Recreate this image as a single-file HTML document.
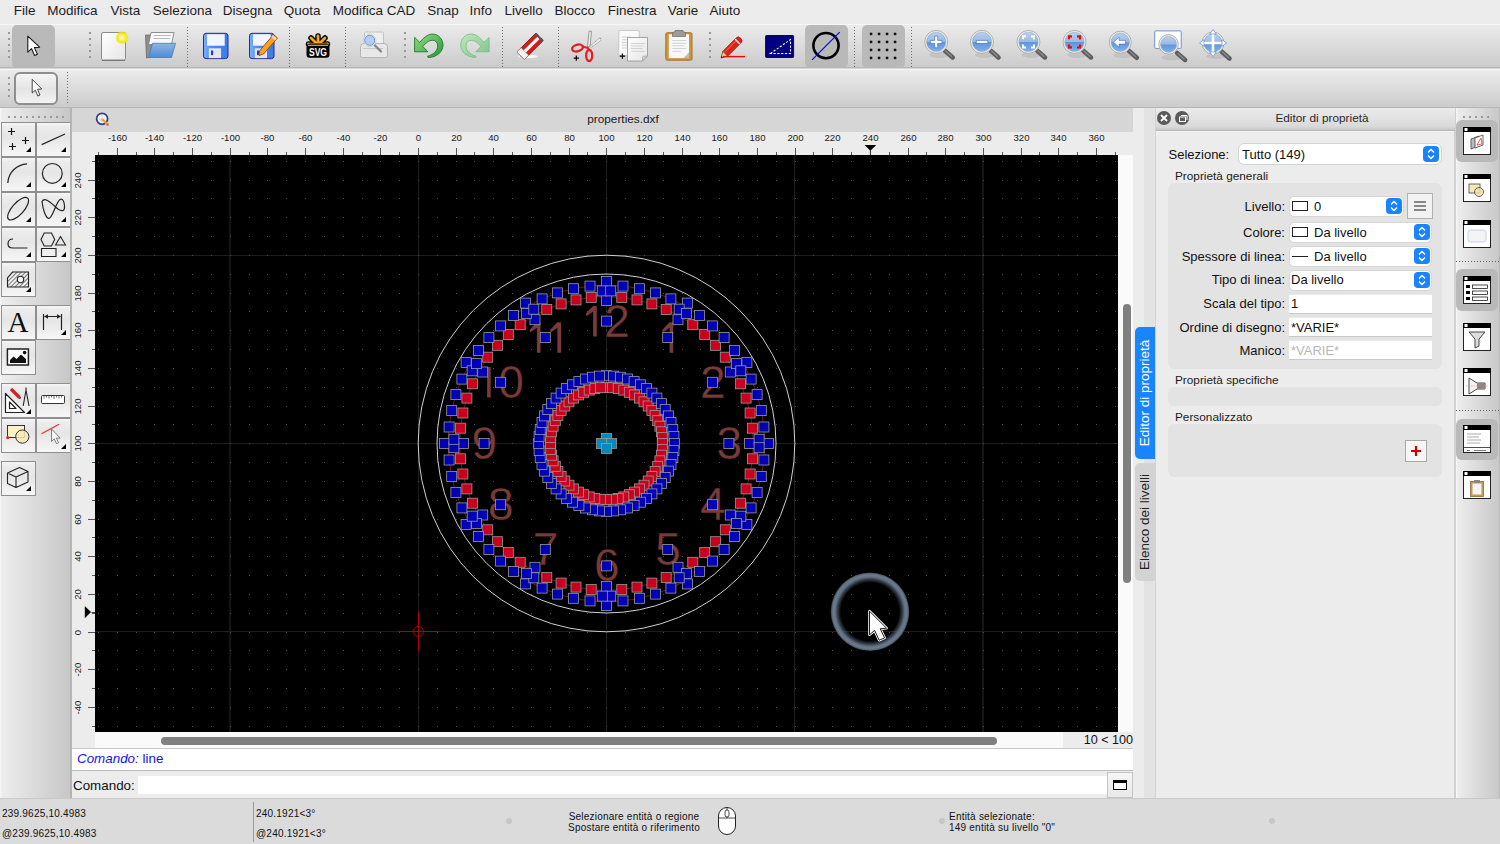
<!DOCTYPE html><html><head><meta charset="utf-8"><style>
html,body{margin:0;padding:0;width:1500px;height:844px;overflow:hidden;background:#ececec;font-family:"Liberation Sans", sans-serif;}
.t{position:absolute;white-space:nowrap;line-height:1;}
.b{position:absolute;box-sizing:border-box;}
svg{position:absolute;display:block;}
</style></head><body>
<div class="b" style="left:0px;top:0px;width:1500px;height:24px;background:#ececec"></div>
<div class="t" style="left:13.8px;top:3.6px;font-size:13.5px;color:#1d1d1d;">File</div>
<div class="t" style="left:47.2px;top:3.6px;font-size:13.5px;color:#1d1d1d;">Modifica</div>
<div class="t" style="left:110.5px;top:3.6px;font-size:13.5px;color:#1d1d1d;">Vista</div>
<div class="t" style="left:152.8px;top:3.6px;font-size:13.5px;color:#1d1d1d;">Seleziona</div>
<div class="t" style="left:222.8px;top:3.6px;font-size:13.5px;color:#1d1d1d;">Disegna</div>
<div class="t" style="left:283.8px;top:3.6px;font-size:13.5px;color:#1d1d1d;">Quota</div>
<div class="t" style="left:332.8px;top:3.6px;font-size:13.5px;color:#1d1d1d;">Modifica CAD</div>
<div class="t" style="left:427.2px;top:3.6px;font-size:13.5px;color:#1d1d1d;">Snap</div>
<div class="t" style="left:469.5px;top:3.6px;font-size:13.5px;color:#1d1d1d;">Info</div>
<div class="t" style="left:504.5px;top:3.6px;font-size:13.5px;color:#1d1d1d;">Livello</div>
<div class="t" style="left:554.5px;top:3.6px;font-size:13.5px;color:#1d1d1d;">Blocco</div>
<div class="t" style="left:607.8px;top:3.6px;font-size:13.5px;color:#1d1d1d;">Finestra</div>
<div class="t" style="left:667.8px;top:3.6px;font-size:13.5px;color:#1d1d1d;">Varie</div>
<div class="t" style="left:709.5px;top:3.6px;font-size:13.5px;color:#1d1d1d;">Aiuto</div>
<div class="b" style="left:0px;top:24px;width:1500px;height:1px;background:#f6f6f6"></div>
<div class="b" style="left:0px;top:25px;width:1500px;height:42px;background:linear-gradient(#ebebeb,#cbcbcb)"></div>
<div class="b" style="left:0px;top:67px;width:1500px;height:1px;background:#b5b5b5"></div>
<div class="b" style="left:0px;top:68px;width:1500px;height:1px;background:#d6d6d6"></div>
<div class="b" style="left:0px;top:69px;width:1500px;height:1px;background:#f6f6f6"></div>
<div class="b" style="left:0px;top:70px;width:1500px;height:37px;background:linear-gradient(#ebebeb,#cbcbcb)"></div>
<div class="b" style="left:0px;top:107px;width:1500px;height:1px;background:#b5b5b5"></div>
<svg style="left:0;top:0" width="1500" height="110" viewBox="0 0 1500 110" shape-rendering="crispEdges"><path d="M8 32h2v2h-2zM8 38h2v2h-2zM8 44h2v2h-2zM8 50h2v2h-2zM8 56h2v2h-2zM89 32h2v2h-2zM89 38h2v2h-2zM89 44h2v2h-2zM89 50h2v2h-2zM89 56h2v2h-2zM404 32h2v2h-2zM404 38h2v2h-2zM404 44h2v2h-2zM404 50h2v2h-2zM404 56h2v2h-2zM709 32h2v2h-2zM709 38h2v2h-2zM709 44h2v2h-2zM709 50h2v2h-2zM709 56h2v2h-2zM8 77h2v2h-2zM8 83h2v2h-2zM8 89h2v2h-2zM8 95h2v2h-2z" fill="#9a9a9a"/><path d="M187 27h1v1h-1zM187 30h1v1h-1zM187 33h1v1h-1zM187 36h1v1h-1zM187 39h1v1h-1zM187 42h1v1h-1zM187 45h1v1h-1zM187 48h1v1h-1zM187 51h1v1h-1zM187 54h1v1h-1zM187 57h1v1h-1zM187 60h1v1h-1zM187 63h1v1h-1zM187 66h1v1h-1zM289 27h1v1h-1zM289 30h1v1h-1zM289 33h1v1h-1zM289 36h1v1h-1zM289 39h1v1h-1zM289 42h1v1h-1zM289 45h1v1h-1zM289 48h1v1h-1zM289 51h1v1h-1zM289 54h1v1h-1zM289 57h1v1h-1zM289 60h1v1h-1zM289 63h1v1h-1zM289 66h1v1h-1zM345 27h1v1h-1zM345 30h1v1h-1zM345 33h1v1h-1zM345 36h1v1h-1zM345 39h1v1h-1zM345 42h1v1h-1zM345 45h1v1h-1zM345 48h1v1h-1zM345 51h1v1h-1zM345 54h1v1h-1zM345 57h1v1h-1zM345 60h1v1h-1zM345 63h1v1h-1zM345 66h1v1h-1zM502 27h1v1h-1zM502 30h1v1h-1zM502 33h1v1h-1zM502 36h1v1h-1zM502 39h1v1h-1zM502 42h1v1h-1zM502 45h1v1h-1zM502 48h1v1h-1zM502 51h1v1h-1zM502 54h1v1h-1zM502 57h1v1h-1zM502 60h1v1h-1zM502 63h1v1h-1zM502 66h1v1h-1zM558 27h1v1h-1zM558 30h1v1h-1zM558 33h1v1h-1zM558 36h1v1h-1zM558 39h1v1h-1zM558 42h1v1h-1zM558 45h1v1h-1zM558 48h1v1h-1zM558 51h1v1h-1zM558 54h1v1h-1zM558 57h1v1h-1zM558 60h1v1h-1zM558 63h1v1h-1zM558 66h1v1h-1zM854 27h1v1h-1zM854 30h1v1h-1zM854 33h1v1h-1zM854 36h1v1h-1zM854 39h1v1h-1zM854 42h1v1h-1zM854 45h1v1h-1zM854 48h1v1h-1zM854 51h1v1h-1zM854 54h1v1h-1zM854 57h1v1h-1zM854 60h1v1h-1zM854 63h1v1h-1zM854 66h1v1h-1zM911 27h1v1h-1zM911 30h1v1h-1zM911 33h1v1h-1zM911 36h1v1h-1zM911 39h1v1h-1zM911 42h1v1h-1zM911 45h1v1h-1zM911 48h1v1h-1zM911 51h1v1h-1zM911 54h1v1h-1zM911 57h1v1h-1zM911 60h1v1h-1zM911 63h1v1h-1zM911 66h1v1h-1zM67 72h1v1h-1zM67 75h1v1h-1zM67 78h1v1h-1zM67 81h1v1h-1zM67 84h1v1h-1zM67 87h1v1h-1zM67 90h1v1h-1zM67 93h1v1h-1zM67 96h1v1h-1zM67 99h1v1h-1zM67 102h1v1h-1z" fill="#6e6e6e"/></svg>
<div class="b" style="left:12px;top:25px;width:43px;height:43px;background:#b9b9b9;border-radius:5px"></div>
<div class="b" style="left:805px;top:25px;width:43px;height:43px;background:#b9b9b9;border-radius:5px"></div>
<div class="b" style="left:862px;top:25px;width:43px;height:43px;background:#b9b9b9;border-radius:5px"></div>
<div class="b" style="left:14px;top:72px;width:44px;height:33px;border:2px solid #8e8e8e;border-radius:6px;background:linear-gradient(#f6f6f6,#e4e4e4 50%,#f2f2f2)"></div>
<svg style="left:0;top:0" width="1500" height="108" viewBox="0 0 1500 108"><defs>
<linearGradient id="mg" x1="0" y1="0" x2="0" y2="1"><stop offset="0" stop-color="#a9c3e8"/><stop offset="0.5" stop-color="#7ba6dc"/><stop offset="0.52" stop-color="#5f95da"/><stop offset="1" stop-color="#7fb0ea"/></linearGradient>
<linearGradient id="floppy" x1="0" y1="0" x2="1" y2="0"><stop offset="0" stop-color="#7fb2ff"/><stop offset="0.3" stop-color="#4d8ff5"/><stop offset="1" stop-color="#3b7be8"/></linearGradient>
<linearGradient id="gr" x1="0" y1="0" x2="1" y2="1"><stop offset="0" stop-color="#98dc82"/><stop offset="1" stop-color="#24983a"/></linearGradient>
<linearGradient id="grl" x1="1" y1="0" x2="0" y2="1"><stop offset="0" stop-color="#c4e6be"/><stop offset="1" stop-color="#7cc28c"/></linearGradient>
<linearGradient id="folder" x1="0" y1="0" x2="0" y2="1"><stop offset="0" stop-color="#8fb6e6"/><stop offset="1" stop-color="#4f8ad6"/></linearGradient>
<radialGradient id="glow" cx="0.5" cy="0.5" r="0.5"><stop offset="0" stop-color="#ffffff"/><stop offset="0.3" stop-color="#fff36a"/><stop offset="0.7" stop-color="#f2e61a"/><stop offset="1" stop-color="#f2e61a" stop-opacity="0"/></radialGradient>
<linearGradient id="paper" x1="0" y1="0" x2="1" y2="1"><stop offset="0" stop-color="#ffffff"/><stop offset="1" stop-color="#e6e6e6"/></linearGradient>
</defs><path d="M27.8 36.2 L27.8 52.2 L31.6 48.7 L34.6 55.6 L37.4 54.3 L34.4 47.6 L39.6 47.2 Z" fill="#fff" stroke="#1a1a1a" stroke-width="1.1" stroke-linejoin="round"/><rect x="101.5" y="32.5" width="24" height="27.5" rx="1.5" fill="url(#paper)" stroke="#8a8a8a"/><path d="M102 60.5h23" stroke="#777" stroke-width="1"/><circle cx="122" cy="37.7" r="7" fill="url(#glow)"/><path d="M145.5 35 h6 l1 1 v20.5 l-6 1.5z" fill="#8e8e8e" stroke="#6a6a6a" stroke-width="0.8"/><path d="M151 32.5 h23 l-2.5 12 h-23z" fill="#f8f8f8" stroke="#777" stroke-width="0.8"/><path d="M154 35.5h17M153.5 38.5h17" stroke="#bbb" stroke-width="1.2"/><path d="M148.5 57.5 L152.5 43.3 H175.5 L171.5 57.5 Z" fill="url(#folder)" stroke="#3f78c8" stroke-width="0.8" stroke-linejoin="round"/><rect x="203.5" y="33.3" width="24.5" height="25.3" rx="2.5" fill="url(#floppy)" stroke="#2a2a9a" stroke-width="1"/><rect x="207" y="34.2" width="17.7" height="11.5" fill="#f2f5ff"/><rect x="208.8" y="48.3" width="12.2" height="9.8" fill="#e4e4ea"/><rect x="211" y="50.5" width="2.2" height="4.6" fill="#1a3fd0"/><rect x="249.5" y="33.3" width="24.5" height="25.3" rx="2.5" fill="url(#floppy)" stroke="#2a2a9a" stroke-width="1"/><rect x="253" y="34.2" width="17.7" height="11.5" fill="#f2f5ff"/><rect x="254.8" y="48.3" width="12.2" height="9.8" fill="#e4e4ea"/><rect x="257" y="50.5" width="2.2" height="4.6" fill="#1a3fd0"/><path d="M259.5 51 L273.5 34.5 L277.5 38 L263.5 54 L259 55.5 Z" fill="#f7a51c" stroke="#a0400a" stroke-width="0.9" stroke-linejoin="round"/><path d="M272 36 L276 39.5" stroke="#f4d0c0" stroke-width="2.5"/><g transform="translate(306,34)"><path d="M12 11 L12 2 M12 11 L5 4 M12 11 L19 4 M12 11 L2.5 10 M12 11 L21.5 10" stroke="#000" stroke-width="5.5" stroke-linecap="round"/><path d="M12 11 L12 2 M12 11 L5 4 M12 11 L19 4 M12 11 L2.5 10 M12 11 L21.5 10" stroke="#f6a623" stroke-width="2.8" stroke-linecap="round"/><path d="M0.5 13.5 Q0.5 9.5 4 9.5 H20 Q23.5 9.5 23.5 13.5 V20.5 Q23.5 23.7 20.5 23.7 H3.5 Q0.5 23.7 0.5 20.5Z" fill="#000"/><path d="M2 11.3 H22" stroke="#f6a623" stroke-width="1.2"/><text x="12" y="22.2" text-anchor="middle" font-family="Liberation Sans" font-weight="bold" font-size="10.5" fill="#fff" textLength="18" lengthAdjust="spacingAndGlyphs">SVG</text></g><rect x="364.5" y="32" width="19" height="14" rx="1" fill="#efefef" stroke="#b8b8b8" stroke-width="0.8"/><path d="M360.5 47 Q360.5 43.5 364 43.5 H384 Q387.5 43.5 387.5 47 V55.5 Q387.5 57.5 385.5 57.5 H362.5 Q360.5 57.5 360.5 55.5Z" fill="#e8e8e8" stroke="#a8a8a8" stroke-width="0.8"/><path d="M363 48.5h20" stroke="#c8c8c8" stroke-width="1"/><line x1="373.5" y1="44" x2="381" y2="51.5" stroke="#888" stroke-width="2.4" stroke-linecap="round"/><circle cx="369.7" cy="40.3" r="6.3" fill="#f4f4f4" stroke="#c8c8c8" stroke-width="0.8"/><circle cx="369.7" cy="40.3" r="5" fill="#b6cdee" stroke="#5c8fd0" stroke-width="0.9"/><path d="M414.6 37.4 L419.8 42.4 C423 38.3 427.5 34 432.5 34 C438.5 34 443 39.3 443 45 C443 52 436.5 57.5 428 57.5 L427.6 56.2 C433.2 54.8 437.7 50.8 437.7 46 C437.7 42.3 435.5 40.3 432.5 40.3 C428.8 40.3 425.6 43.2 422.8 46.4 L427.8 51.8 L414.6 51.8 Z" fill="url(#gr)" stroke="#1b7a2d" stroke-width="0.9" stroke-linejoin="round"/><g transform="translate(903.7,0) scale(-1,1)"><path d="M414.6 37.4 L419.8 42.4 C423 38.3 427.5 34 432.5 34 C438.5 34 443 39.3 443 45 C443 52 436.5 57.5 428 57.5 L427.6 56.2 C433.2 54.8 437.7 50.8 437.7 46 C437.7 42.3 435.5 40.3 432.5 40.3 C428.8 40.3 425.6 43.2 422.8 46.4 L427.8 51.8 L414.6 51.8 Z" fill="url(#grl)" stroke="#79bf88" stroke-width="0.9" stroke-linejoin="round"/></g><ellipse cx="528" cy="56.5" rx="10" ry="1.6" fill="#fff" opacity="0.8"/><ellipse cx="524" cy="56.3" rx="4" ry="1.2" fill="#666" opacity="0.5"/><g transform="rotate(-45 530 46)"><rect x="516.5" y="41" width="27" height="10.5" rx="1" fill="#d41c1c" stroke="#7a1010" stroke-width="0.8"/><rect x="516.5" y="41" width="6" height="10.5" fill="#f2f2f2" stroke="#888" stroke-width="0.6"/><rect x="522.5" y="44.6" width="21" height="3.2" fill="#fafafa"/><rect x="541.5" y="41" width="2" height="10.5" fill="#555"/></g><path d="M587.5 47 L589 31 L591.5 31.2 L590 46z" fill="#eee" stroke="#777" stroke-width="0.7"/><path d="M589.5 46.5 L600.3 37.5 L601 40.5 L591 47.5z" fill="#eee" stroke="#777" stroke-width="0.7" stroke-dasharray="1.2 0.6"/><ellipse cx="577.5" cy="48" rx="5.5" ry="3.3" transform="rotate(-15 577.5 48)" fill="none" stroke="#e02020" stroke-width="2.3"/><ellipse cx="589.2" cy="55.5" rx="3" ry="5.5" fill="none" stroke="#e02020" stroke-width="2.3"/><path d="M582.5 46.5 L588 48 L589 50" stroke="#e02020" stroke-width="2" fill="none"/><path d="M576.3 55.5 v5.2 M573.7 58.1 h5.2" stroke="#000" stroke-width="1.2"/><rect x="618.8" y="30.5" width="20.5" height="25" rx="1.5" fill="#fafafa" stroke="#c0c0c0" stroke-width="0.8"/><path d="M622 37h8M622 39.8h8M622 42.5h8M622 45.2h8M622 48h8" stroke="#d0d0d0" stroke-width="1"/><path d="M627.5 37.5 h20 v18.5 l-5 5 h-15z" fill="url(#paper)" stroke="#9a9a9a" stroke-width="0.9" stroke-linejoin="round"/><path d="M642.5 61 l5-5 h-4 l-1 1z" fill="#ccc" stroke="#999" stroke-width="0.5"/><path d="M631 43.5h13.5M631 46h12.5M631 48.5h11.5M631 51.3h13.5" stroke="#ccc" stroke-width="0.9"/><path d="M622.4 53.4 v5.4 M619.7 56.1 h5.4" stroke="#000" stroke-width="1.3"/><rect x="665.8" y="32.7" width="26.2" height="27.5" rx="1.5" fill="#cf9640" stroke="#9a6a20" stroke-width="0.9"/><rect x="668.8" y="34.3" width="20.2" height="23.8" fill="#f8f8f8"/><path d="M683.5 58.1 l5.5-5.5 v5.5z" fill="#bdbdbd"/><path d="M672.3 40.5h14M672.3 43.3h14M672.3 45.8h12M672.3 48.5h14M672.3 51.4h9" stroke="#cfcfcf" stroke-width="0.9"/><path d="M672.5 33.5 Q672.5 32 674 32 H675 V30.5 H683 V32 H684 Q685.5 32 685.5 33.5 V36.5 H672.5Z" fill="#9c9c94" stroke="#6a6a64" stroke-width="0.7"/><g transform="rotate(-45 733 46)"><path d="M722 42.6 h19.5 q2.5 0 2.5 3.4 q0 3.4 -2.5 3.4 h-19.5z" fill="#e0201c" stroke="#7a3a10" stroke-width="0.8"/><rect x="738.5" y="42.6" width="1.6" height="6.8" fill="#d8d8d8"/><path d="M722 42.6 L716 46 L722 49.4z" fill="#f0c8a0" stroke="#7a3a10" stroke-width="0.7"/><path d="M718 44.9 L716 46 L718 47.1z" fill="#222"/><path d="M723 44.5h16" stroke="#f06a40" stroke-width="1"/></g><path d="M723 56.6 H745" stroke="#ff0000" stroke-width="1.4"/><rect x="765.6" y="35.5" width="28" height="22" rx="0.8" fill="#000080" stroke="#111" stroke-width="1"/><path d="M770.5 53.5 L790.5 39.5 V53.5 Z" fill="none" stroke="#fff" stroke-width="1.1" stroke-dasharray="2.2 1.6"/><circle cx="826" cy="45.6" r="12.6" fill="none" stroke="#000" stroke-width="2.6"/><line x1="812" y1="59.8" x2="839.7" y2="32.1" stroke="#0000ff" stroke-width="1.1"/><rect x="869.8" y="32.699999999999996" width="2.5" height="2.5" fill="#111"/><rect x="869.8" y="40.699999999999996" width="2.5" height="2.5" fill="#111"/><rect x="869.8" y="48.699999999999996" width="2.5" height="2.5" fill="#111"/><rect x="869.8" y="56.699999999999996" width="2.5" height="2.5" fill="#111"/><rect x="877.8" y="32.699999999999996" width="2.5" height="2.5" fill="#111"/><rect x="877.8" y="40.699999999999996" width="2.5" height="2.5" fill="#111"/><rect x="877.8" y="48.699999999999996" width="2.5" height="2.5" fill="#111"/><rect x="877.8" y="56.699999999999996" width="2.5" height="2.5" fill="#111"/><rect x="885.8" y="32.699999999999996" width="2.5" height="2.5" fill="#111"/><rect x="885.8" y="40.699999999999996" width="2.5" height="2.5" fill="#111"/><rect x="885.8" y="48.699999999999996" width="2.5" height="2.5" fill="#111"/><rect x="885.8" y="56.699999999999996" width="2.5" height="2.5" fill="#111"/><rect x="893.8" y="32.699999999999996" width="2.5" height="2.5" fill="#111"/><rect x="893.8" y="40.699999999999996" width="2.5" height="2.5" fill="#111"/><rect x="893.8" y="48.699999999999996" width="2.5" height="2.5" fill="#111"/><rect x="893.8" y="56.699999999999996" width="2.5" height="2.5" fill="#111"/><g>
<ellipse cx="939.2" cy="54.9" rx="10" ry="3" fill="#000" opacity="0.08"/>
<line x1="944.7" y1="50.4" x2="952.7" y2="57.4" stroke="#5e5e5e" stroke-width="4.6" stroke-linecap="round"/>
<line x1="945.7" y1="50.9" x2="951.7" y2="56.4" stroke="#8a8a8a" stroke-width="1.4" stroke-linecap="round"/>
<circle cx="936.2" cy="41.9" r="11.5" fill="#eeeee8" stroke="#a9a9a0" stroke-width="0.9"/>
<circle cx="936.2" cy="41.9" r="9.7" fill="url(#mg)" stroke="#9ab2d2" stroke-width="0.6"/>
<path d="M927.1 41.9 A9.1 9.1 0 0 1 945.3000000000001 41.9Z" fill="#fff" opacity="0.22"/>
<path d="M934.7 36.1h3v4.3h4.3v3h-4.3v4.3h-3v-4.3h-4.3v-3h4.3z" fill="#fff" stroke="#2b5fb0" stroke-width="0.6"/>
</g><g>
<ellipse cx="985.0" cy="54.9" rx="10" ry="3" fill="#000" opacity="0.08"/>
<line x1="990.5" y1="50.4" x2="998.5" y2="57.4" stroke="#5e5e5e" stroke-width="4.6" stroke-linecap="round"/>
<line x1="991.5" y1="50.9" x2="997.5" y2="56.4" stroke="#8a8a8a" stroke-width="1.4" stroke-linecap="round"/>
<circle cx="982" cy="41.9" r="11.5" fill="#eeeee8" stroke="#a9a9a0" stroke-width="0.9"/>
<circle cx="982" cy="41.9" r="9.7" fill="url(#mg)" stroke="#9ab2d2" stroke-width="0.6"/>
<path d="M972.9 41.9 A9.1 9.1 0 0 1 991.1 41.9Z" fill="#fff" opacity="0.22"/>
<path d="M976.3 40.4h11.5v3h-11.5z" fill="#fff" stroke="#2b5fb0" stroke-width="0.6"/>
</g><g>
<ellipse cx="1031.5" cy="54.9" rx="10" ry="3" fill="#000" opacity="0.08"/>
<line x1="1037.0" y1="50.4" x2="1045.0" y2="57.4" stroke="#5e5e5e" stroke-width="4.6" stroke-linecap="round"/>
<line x1="1038.0" y1="50.9" x2="1044.0" y2="56.4" stroke="#8a8a8a" stroke-width="1.4" stroke-linecap="round"/>
<circle cx="1028.5" cy="41.9" r="11.5" fill="#eeeee8" stroke="#a9a9a0" stroke-width="0.9"/>
<circle cx="1028.5" cy="41.9" r="9.7" fill="url(#mg)" stroke="#9ab2d2" stroke-width="0.6"/>
<path d="M1019.4 41.9 A9.1 9.1 0 0 1 1037.6000000000001 41.9Z" fill="#fff" opacity="0.22"/>
<path d="M1023.0 39.3v-3h3M1031.0 36.4h3v3M1034.0 44.5v3h-3M1026.0 47.4h-3v-3" stroke="#fff" stroke-width="2" fill="none"/>
</g><g>
<ellipse cx="1077.5" cy="54.9" rx="10" ry="3" fill="#000" opacity="0.08"/>
<line x1="1083.0" y1="50.4" x2="1091.0" y2="57.4" stroke="#5e5e5e" stroke-width="4.6" stroke-linecap="round"/>
<line x1="1084.0" y1="50.9" x2="1090.0" y2="56.4" stroke="#8a8a8a" stroke-width="1.4" stroke-linecap="round"/>
<circle cx="1074.5" cy="41.9" r="11.5" fill="#eeeee8" stroke="#a9a9a0" stroke-width="0.9"/>
<circle cx="1074.5" cy="41.9" r="9.7" fill="url(#mg)" stroke="#9ab2d2" stroke-width="0.6"/>
<path d="M1065.3999999999999 41.9 A9.1 9.1 0 0 1 1083.6000000000001 41.9Z" fill="#fff" opacity="0.22"/>
<path d="M1069.0 39.3v-3h3M1077.0 36.4h3v3M1080.0 44.5v3h-3M1072.0 47.4h-3v-3" stroke="#ff0000" stroke-width="2.2" fill="none"/>
</g><g>
<ellipse cx="1123.3" cy="55.2" rx="10" ry="3" fill="#000" opacity="0.08"/>
<line x1="1128.8" y1="50.7" x2="1136.8" y2="57.7" stroke="#5e5e5e" stroke-width="4.6" stroke-linecap="round"/>
<line x1="1129.8" y1="51.2" x2="1135.8" y2="56.7" stroke="#8a8a8a" stroke-width="1.4" stroke-linecap="round"/>
<circle cx="1120.3" cy="42.2" r="11" fill="#eeeee8" stroke="#a9a9a0" stroke-width="0.9"/>
<circle cx="1120.3" cy="42.2" r="9.2" fill="url(#mg)" stroke="#9ab2d2" stroke-width="0.6"/>
<path d="M1111.6999999999998 42.2 A8.6 8.6 0 0 1 1128.9 42.2Z" fill="#fff" opacity="0.22"/>
<path d="M1113.5 42.2 l5.5-5 v3.2 h6.5 v3.6 h-6.5 v3.2z" fill="#fff" stroke="#2b5fb0" stroke-width="0.5"/>
</g><rect x="1154.7" y="30.9" width="26.5" height="17.5" rx="1" fill="#fff" stroke="#6b93d0" stroke-width="1"/><g>
<ellipse cx="1171.6" cy="57.4" rx="10" ry="3" fill="#000" opacity="0.08"/>
<line x1="1177.1" y1="52.9" x2="1185.1" y2="59.9" stroke="#5e5e5e" stroke-width="4.6" stroke-linecap="round"/>
<line x1="1178.1" y1="53.4" x2="1184.1" y2="58.9" stroke="#8a8a8a" stroke-width="1.4" stroke-linecap="round"/>
<circle cx="1168.6" cy="44.4" r="9.8" fill="#eeeee8" stroke="#a9a9a0" stroke-width="0.9"/>
<circle cx="1168.6" cy="44.4" r="8.0" fill="url(#mg)" stroke="#9ab2d2" stroke-width="0.6"/>
<path d="M1161.1999999999998 44.4 A7.4 7.4 0 0 1 1176.0 44.4Z" fill="#fff" opacity="0.22"/>

</g><g>
<ellipse cx="1216.0" cy="56.0" rx="10" ry="3" fill="#000" opacity="0.08"/>
<line x1="1221.5" y1="51.5" x2="1229.5" y2="58.5" stroke="#5e5e5e" stroke-width="4.6" stroke-linecap="round"/>
<line x1="1222.5" y1="52" x2="1228.5" y2="57.5" stroke="#8a8a8a" stroke-width="1.4" stroke-linecap="round"/>
<circle cx="1213" cy="43" r="11" fill="#eeeee8" stroke="#a9a9a0" stroke-width="0.9"/>
<circle cx="1213" cy="43" r="9.2" fill="url(#mg)" stroke="#9ab2d2" stroke-width="0.6"/>
<path d="M1204.3999999999999 43 A8.6 8.6 0 0 1 1221.6000000000001 43Z" fill="#fff" opacity="0.22"/>
<path d="M1213 31v24M1201 43h24" stroke="#fff" stroke-width="2.6"/><path d="M1213 29.5l-3.2 4.5h6.4zM1213 56.5l-3.2-4.5h6.4zM1199.5 43l4.5-3.2v6.4zM1226.5 43l-4.5-3.2v6.4z" fill="#fff" stroke="#4a7cc8" stroke-width="0.6"/>
</g><path d="M32.2 79.3 L32.2 93 L35.3 90.2 L37.8 96 L40 95 L37.5 89.3 L41.8 89 Z" fill="#fff" stroke="#444" stroke-width="1" stroke-linejoin="round"/></svg>
<div class="b" style="left:0px;top:108px;width:70px;height:690px;background:linear-gradient(90deg,#f7f7f7 0px,#ededed 2px,#c7c7c7 70px)"></div>
<svg style="left:0;top:108" width="70" height="20" viewBox="0 108 70 20" shape-rendering="crispEdges"><path d="M8 116h2v2h-2zM14 116h2v2h-2zM20 116h2v2h-2zM26 116h2v2h-2zM32 116h2v2h-2zM38 116h2v2h-2zM44 116h2v2h-2zM50 116h2v2h-2zM56 116h2v2h-2zM62 116h2v2h-2z" fill="#9a9a9a"/></svg>
<svg style="left:0;top:0" width="72" height="500" viewBox="0 0 72 500"><defs><linearGradient id="lt" x1="0" y1="0" x2="0" y2="1"><stop offset="0" stop-color="#f7f7f7"/><stop offset="0.12" stop-color="#ececec"/><stop offset="0.45" stop-color="#e6e6e6"/><stop offset="1" stop-color="#f7f7f7"/></linearGradient><pattern id="hatch" width="3" height="3" patternUnits="userSpaceOnUse" patternTransform="rotate(45)"><rect width="3" height="3" fill="#f0f0f0"/><rect width="1" height="3" fill="#777"/></pattern></defs><rect x="1.5" y="122.5" width="34" height="34" fill="url(#lt)" stroke="#8f8f8f" stroke-width="1"/><rect x="36.5" y="122.5" width="34" height="34" fill="url(#lt)" stroke="#8f8f8f" stroke-width="1"/><rect x="1.5" y="157.5" width="34" height="34" fill="url(#lt)" stroke="#8f8f8f" stroke-width="1"/><rect x="36.5" y="157.5" width="34" height="34" fill="url(#lt)" stroke="#8f8f8f" stroke-width="1"/><rect x="1.5" y="192.5" width="34" height="34" fill="url(#lt)" stroke="#8f8f8f" stroke-width="1"/><rect x="36.5" y="192.5" width="34" height="34" fill="url(#lt)" stroke="#8f8f8f" stroke-width="1"/><rect x="1.5" y="227.5" width="34" height="34" fill="url(#lt)" stroke="#8f8f8f" stroke-width="1"/><rect x="36.5" y="227.5" width="34" height="34" fill="url(#lt)" stroke="#8f8f8f" stroke-width="1"/><rect x="1.5" y="262.5" width="34" height="34" fill="url(#lt)" stroke="#8f8f8f" stroke-width="1"/><rect x="1.5" y="305.5" width="34" height="34" fill="url(#lt)" stroke="#8f8f8f" stroke-width="1"/><rect x="36.5" y="305.5" width="34" height="34" fill="url(#lt)" stroke="#8f8f8f" stroke-width="1"/><rect x="1.5" y="340.5" width="34" height="34" fill="url(#lt)" stroke="#8f8f8f" stroke-width="1"/><rect x="1.5" y="383.5" width="34" height="34" fill="url(#lt)" stroke="#8f8f8f" stroke-width="1"/><rect x="36.5" y="383.5" width="34" height="34" fill="url(#lt)" stroke="#8f8f8f" stroke-width="1"/><rect x="1.5" y="418.5" width="34" height="34" fill="url(#lt)" stroke="#8f8f8f" stroke-width="1"/><rect x="36.5" y="418.5" width="34" height="34" fill="url(#lt)" stroke="#8f8f8f" stroke-width="1"/><rect x="1.5" y="461.5" width="34" height="34" fill="url(#lt)" stroke="#8f8f8f" stroke-width="1"/><path d="M8 131.5h7M11.5 128v7M22 140.5h7M25.5 137v7M9 146.5h7M12.5 143v7" stroke="#111" stroke-width="1.2" fill="none"/><path d="M31 152 L26 152 L31 147Z" fill="#000"/><path d="M41.7 144.6 L65 134" stroke="#222" stroke-width="1.2" fill="none"/><path d="M66 152 L61 152 L66 147Z" fill="#000"/><path d="M7.8 183 C8.5 172 17 164.5 27 163.8" stroke="#222" stroke-width="1.2" fill="none"/><path d="M31 187 L26 187 L31 182Z" fill="#000"/><circle cx="52.3" cy="173.4" r="9.9" stroke="#222" stroke-width="1.2" fill="none"/><path d="M66 187 L61 187 L66 182Z" fill="#000"/><ellipse cx="18.1" cy="208.7" rx="14.2" ry="5.8" transform="rotate(-48 18.1 208.7)" stroke="#222" stroke-width="1.2" fill="none"/><path d="M31 222 L26 222 L31 217Z" fill="#000"/><path d="M42 201.5 C43 210 46 218.5 49 218.3 C52 218 54 209 58 202 C61 197 64 199 64.5 206 C65 211 62 212 58 209 C52 204 45 196 42 201.5Z" stroke="#222" stroke-width="1.2" fill="none"/><path d="M66 222 L61 222 L66 217Z" fill="#000"/><path d="M13 239 C9 239 8 242 8 244 C8 246 9.5 248 13 248 H27.5" stroke="#222" stroke-width="1.2" fill="none"/><path d="M31 257 L26 257 L31 252Z" fill="#000"/><path d="M41 239.5 l3.2-6.5 h7.3 l3.2 6.5 l-3.2 6.5 h-7.3z M55.5 245 l5-8.5 l5 8.5z M41.5 248.5 h14.5 v8 h-14.5z" stroke="#222" stroke-width="1.1" fill="none"/><path d="M66 257 L61 257 L66 252Z" fill="#000"/><path d="M7.5 287 V278 l5-6 h16 v15z" fill="url(#hatch)" stroke="#222" stroke-width="1.1"/><circle cx="20.5" cy="279.5" r="3.2" fill="#f2f2f2" stroke="#222" stroke-width="1.1"/><path d="M31 292 L26 292 L31 287Z" fill="#000"/><text x="18" y="332" text-anchor="middle" font-family="Liberation Serif" font-size="29" fill="#111">A</text><path d="M43.5 314 v16 M61.5 314 v16 M45 316.5 h15" stroke="#222" stroke-width="1.2" fill="none"/><path d="M44 316.5 l4-2.2v4.4z M61 316.5 l-4-2.2v4.4z" fill="#222"/><path d="M66 335 L61 335 L66 330Z" fill="#000"/><rect x="7.4" y="349" width="21" height="16" fill="#fff" stroke="#222" stroke-width="1.5"/><path d="M10 363 v-3 l3.5-3.5 l3 2.5 l4.5-4.5 l5 4.5 v4z" fill="#111"/><circle cx="24.6" cy="352.6" r="1.8" fill="#111"/><path d="M5.5 393.5 v19 h19z M9.5 402 v6.5 h6.5z" fill="#fff" stroke="#222" stroke-width="1.2" stroke-linejoin="round"/><path d="M11 389 l8.5 8.5" stroke="#d32020" stroke-width="3.2"/><path d="M19.5 397.5 l1 1" stroke="#333" stroke-width="2"/><path d="M26 387.5 v3 M26 390 l-2.8 16 M26 390 l3 16" stroke="#222" stroke-width="1.1" fill="none"/><path d="M31 414 L26 414 L31 409Z" fill="#000"/><rect x="41.5" y="395.5" width="23" height="8" rx="1" fill="#fff" stroke="#333" stroke-width="1"/><path d="M44 396v2.5M46.5 396v1.5M49 396v2.5M51.5 396v1.5M54 396v3M56.5 396v1.5M59 396v2.5M61.5 396v1.5" stroke="#333" stroke-width="0.7"/><rect x="7.5" y="425.5" width="17" height="12" fill="#fdf2c6" stroke="#333" stroke-width="1"/><circle cx="22.3" cy="436.6" r="6.6" fill="#f8e9b8" fill-opacity="0.85" stroke="#333" stroke-width="1"/><circle cx="7.7" cy="437.6" r="1.6" fill="#ee2222"/><path d="M41.5 433.8 L59 424.2" stroke="#f03030" stroke-width="1.3"/><path d="M51.5 429 v12.5 l2.8-2.6 l2.2 4.8 l2-0.9 l-2.1-4.7 h3.8z" fill="#f4f4f4" stroke="#666" stroke-width="0.8" stroke-linejoin="round"/><path d="M66 449 L61 449 L66 444Z" fill="#000"/><path d="M7.5 473 l12-5.5 l8.5 4 v10.5 l-12 5.5 l-8.5-4z M7.5 473 l8.5 4 l12-5.5 M16 477 v10.5" fill="none" stroke="#222" stroke-width="1.1" stroke-linejoin="round"/><path d="M31 491 L26 491 L31 486Z" fill="#000"/></svg>
<div class="b" style="left:70px;top:108px;width:2px;height:690px;background:#b4b4b4"></div>
<div class="b" style="left:72px;top:108px;width:1062px;height:24px;background:#d6d6d6"></div>
<div class="t" style="left:423px;width:400px;text-align:center;top:114.4px;font-size:11.8px;color:#1a1a1a;">properties.dxf</div>
<svg style="left:94px;top:111px" width="18" height="18" viewBox="0 0 18 18" ><circle cx="8.1" cy="7.8" r="5.5" fill="#f6f6f6" stroke="#2c3f8c" stroke-width="1.7"/><path d="M8 4v7M5 8h6" stroke="#bbb" stroke-width="0.6"/><path d="M6 9.5l3-1" stroke="#e88" stroke-width="0.6"/><path d="M8.5 8.5 L13 13" stroke="#f3a21a" stroke-width="2.2"/><circle cx="13.6" cy="13.6" r="1.3" fill="#e56060"/></svg>
<div class="b" style="left:72px;top:132px;width:1062px;height:23px;background:#ececec"></div>
<div class="b" style="left:72px;top:155px;width:23px;height:593px;background:#ececec"></div>
<svg style="left:0;top:0" width="1134" height="748" viewBox="0 0 1134 748"><path d="M98.5 152V155M117.5 148V155M136.5 152V155M154.5 148V155M173.5 152V155M192.5 148V155M211.5 152V155M230.5 148V155M249.5 152V155M267.5 148V155M286.5 152V155M305.5 148V155M324.5 152V155M343.5 148V155M362.5 152V155M380.5 148V155M399.5 152V155M418.5 148V155M437.5 152V155M456.5 148V155M474.5 152V155M493.5 148V155M512.5 152V155M531.5 148V155M550.5 152V155M569.5 148V155M587.5 152V155M606.5 148V155M625.5 152V155M644.5 148V155M663.5 152V155M682.5 148V155M700.5 152V155M719.5 148V155M738.5 152V155M757.5 148V155M776.5 152V155M795.5 148V155M813.5 152V155M832.5 148V155M851.5 152V155M870.5 148V155M889.5 152V155M908.5 148V155M926.5 152V155M945.5 148V155M964.5 152V155M983.5 148V155M1002.5 152V155M1021.5 148V155M1039.5 152V155M1058.5 148V155M1077.5 152V155M1096.5 148V155M1115.5 152V155M92 726.5H95M88 707.5H95M92 688.5H95M88 669.5H95M92 650.5H95M88 632.5H95M92 613.5H95M88 594.5H95M92 575.5H95M88 556.5H95M92 537.5H95M88 519.5H95M92 500.5H95M88 481.5H95M92 462.5H95M88 443.5H95M92 424.5H95M88 406.5H95M92 387.5H95M88 368.5H95M92 349.5H95M88 330.5H95M92 311.5H95M88 293.5H95M92 274.5H95M88 255.5H95M92 236.5H95M88 217.5H95M92 198.5H95M88 180.5H95M92 161.5H95" stroke="#555" stroke-width="1" shape-rendering="crispEdges"/><g font-family="Liberation Sans" font-size="9.6" fill="#1a1a1a"><text x="117.5" y="140.7" text-anchor="middle">-160</text><text x="154.5" y="140.7" text-anchor="middle">-140</text><text x="192.5" y="140.7" text-anchor="middle">-120</text><text x="230.5" y="140.7" text-anchor="middle">-100</text><text x="267.5" y="140.7" text-anchor="middle">-80</text><text x="305.5" y="140.7" text-anchor="middle">-60</text><text x="343.5" y="140.7" text-anchor="middle">-40</text><text x="380.5" y="140.7" text-anchor="middle">-20</text><text x="418.5" y="140.7" text-anchor="middle">0</text><text x="456.5" y="140.7" text-anchor="middle">20</text><text x="493.5" y="140.7" text-anchor="middle">40</text><text x="531.5" y="140.7" text-anchor="middle">60</text><text x="569.5" y="140.7" text-anchor="middle">80</text><text x="606.5" y="140.7" text-anchor="middle">100</text><text x="644.5" y="140.7" text-anchor="middle">120</text><text x="682.5" y="140.7" text-anchor="middle">140</text><text x="719.5" y="140.7" text-anchor="middle">160</text><text x="757.5" y="140.7" text-anchor="middle">180</text><text x="795.5" y="140.7" text-anchor="middle">200</text><text x="832.5" y="140.7" text-anchor="middle">220</text><text x="870.5" y="140.7" text-anchor="middle">240</text><text x="908.5" y="140.7" text-anchor="middle">260</text><text x="945.5" y="140.7" text-anchor="middle">280</text><text x="983.5" y="140.7" text-anchor="middle">300</text><text x="1021.5" y="140.7" text-anchor="middle">320</text><text x="1058.5" y="140.7" text-anchor="middle">340</text><text x="1096.5" y="140.7" text-anchor="middle">360</text><text x="0" y="0" text-anchor="middle" transform="translate(80.6 707.5) rotate(-90)">-40</text><text x="0" y="0" text-anchor="middle" transform="translate(80.6 669.5) rotate(-90)">-20</text><text x="0" y="0" text-anchor="middle" transform="translate(80.6 632.5) rotate(-90)">0</text><text x="0" y="0" text-anchor="middle" transform="translate(80.6 594.5) rotate(-90)">20</text><text x="0" y="0" text-anchor="middle" transform="translate(80.6 556.5) rotate(-90)">40</text><text x="0" y="0" text-anchor="middle" transform="translate(80.6 519.5) rotate(-90)">60</text><text x="0" y="0" text-anchor="middle" transform="translate(80.6 481.5) rotate(-90)">80</text><text x="0" y="0" text-anchor="middle" transform="translate(80.6 443.5) rotate(-90)">100</text><text x="0" y="0" text-anchor="middle" transform="translate(80.6 406.5) rotate(-90)">120</text><text x="0" y="0" text-anchor="middle" transform="translate(80.6 368.5) rotate(-90)">140</text><text x="0" y="0" text-anchor="middle" transform="translate(80.6 330.5) rotate(-90)">160</text><text x="0" y="0" text-anchor="middle" transform="translate(80.6 293.5) rotate(-90)">180</text><text x="0" y="0" text-anchor="middle" transform="translate(80.6 255.5) rotate(-90)">200</text><text x="0" y="0" text-anchor="middle" transform="translate(80.6 217.5) rotate(-90)">220</text><text x="0" y="0" text-anchor="middle" transform="translate(80.6 180.5) rotate(-90)">240</text></g><path d="M864.6 145 h11.6 l-5.8 5.8z" fill="#000"/><path d="M870.4 150v5" stroke="#333" stroke-width="1"/><path d="M84.8 606 v12.2 l6.2 -6.1z" fill="#000"/><path d="M91.5 612.5h3.5" stroke="#444" stroke-width="1"/></svg>
<svg width="1023" height="577" viewBox="95 155 1023 577" style="position:absolute;left:95px;top:155px;display:block" shape-rendering="crispEdges"><rect x="95" y="155" width="1023" height="577" fill="#000"/><rect x="229" y="155" width="1" height="577" fill="#151515"/><rect x="230" y="155" width="1" height="577" fill="#151515"/><rect x="418" y="155" width="1" height="577" fill="#1e1e1e"/><rect x="606" y="155" width="1" height="577" fill="#1e1e1e"/><rect x="794" y="155" width="1" height="577" fill="#1e1e1e"/><rect x="982" y="155" width="1" height="577" fill="#151515"/><rect x="983" y="155" width="1" height="577" fill="#151515"/><rect x="95" y="255" width="1023" height="1" fill="#1e1e1e"/><rect x="95" y="443" width="1023" height="1" fill="#1e1e1e"/><rect x="95" y="631" width="1023" height="1" fill="#1e1e1e"/><path d="M98 726h1v1h-1zM98 707h1v1h-1zM98 688h1v1h-1zM98 669h1v1h-1zM98 650h1v1h-1zM98 632h1v1h-1zM98 613h1v1h-1zM98 594h1v1h-1zM98 575h1v1h-1zM98 556h1v1h-1zM98 537h1v1h-1zM98 519h1v1h-1zM98 500h1v1h-1zM98 481h1v1h-1zM98 462h1v1h-1zM98 443h1v1h-1zM98 424h1v1h-1zM98 406h1v1h-1zM98 387h1v1h-1zM98 368h1v1h-1zM98 349h1v1h-1zM98 330h1v1h-1zM98 311h1v1h-1zM98 293h1v1h-1zM98 274h1v1h-1zM98 255h1v1h-1zM98 236h1v1h-1zM98 217h1v1h-1zM98 198h1v1h-1zM98 180h1v1h-1zM98 161h1v1h-1zM117 726h1v1h-1zM117 707h1v1h-1zM117 688h1v1h-1zM117 669h1v1h-1zM117 650h1v1h-1zM117 632h1v1h-1zM117 613h1v1h-1zM117 594h1v1h-1zM117 575h1v1h-1zM117 556h1v1h-1zM117 537h1v1h-1zM117 519h1v1h-1zM117 500h1v1h-1zM117 481h1v1h-1zM117 462h1v1h-1zM117 443h1v1h-1zM117 424h1v1h-1zM117 406h1v1h-1zM117 387h1v1h-1zM117 368h1v1h-1zM117 349h1v1h-1zM117 330h1v1h-1zM117 311h1v1h-1zM117 293h1v1h-1zM117 274h1v1h-1zM117 255h1v1h-1zM117 236h1v1h-1zM117 217h1v1h-1zM117 198h1v1h-1zM117 180h1v1h-1zM117 161h1v1h-1zM136 726h1v1h-1zM136 707h1v1h-1zM136 688h1v1h-1zM136 669h1v1h-1zM136 650h1v1h-1zM136 632h1v1h-1zM136 613h1v1h-1zM136 594h1v1h-1zM136 575h1v1h-1zM136 556h1v1h-1zM136 537h1v1h-1zM136 519h1v1h-1zM136 500h1v1h-1zM136 481h1v1h-1zM136 462h1v1h-1zM136 443h1v1h-1zM136 424h1v1h-1zM136 406h1v1h-1zM136 387h1v1h-1zM136 368h1v1h-1zM136 349h1v1h-1zM136 330h1v1h-1zM136 311h1v1h-1zM136 293h1v1h-1zM136 274h1v1h-1zM136 255h1v1h-1zM136 236h1v1h-1zM136 217h1v1h-1zM136 198h1v1h-1zM136 180h1v1h-1zM136 161h1v1h-1zM154 726h1v1h-1zM154 707h1v1h-1zM154 688h1v1h-1zM154 669h1v1h-1zM154 650h1v1h-1zM154 632h1v1h-1zM154 613h1v1h-1zM154 594h1v1h-1zM154 575h1v1h-1zM154 556h1v1h-1zM154 537h1v1h-1zM154 519h1v1h-1zM154 500h1v1h-1zM154 481h1v1h-1zM154 462h1v1h-1zM154 443h1v1h-1zM154 424h1v1h-1zM154 406h1v1h-1zM154 387h1v1h-1zM154 368h1v1h-1zM154 349h1v1h-1zM154 330h1v1h-1zM154 311h1v1h-1zM154 293h1v1h-1zM154 274h1v1h-1zM154 255h1v1h-1zM154 236h1v1h-1zM154 217h1v1h-1zM154 198h1v1h-1zM154 180h1v1h-1zM154 161h1v1h-1zM173 726h1v1h-1zM173 707h1v1h-1zM173 688h1v1h-1zM173 669h1v1h-1zM173 650h1v1h-1zM173 632h1v1h-1zM173 613h1v1h-1zM173 594h1v1h-1zM173 575h1v1h-1zM173 556h1v1h-1zM173 537h1v1h-1zM173 519h1v1h-1zM173 500h1v1h-1zM173 481h1v1h-1zM173 462h1v1h-1zM173 443h1v1h-1zM173 424h1v1h-1zM173 406h1v1h-1zM173 387h1v1h-1zM173 368h1v1h-1zM173 349h1v1h-1zM173 330h1v1h-1zM173 311h1v1h-1zM173 293h1v1h-1zM173 274h1v1h-1zM173 255h1v1h-1zM173 236h1v1h-1zM173 217h1v1h-1zM173 198h1v1h-1zM173 180h1v1h-1zM173 161h1v1h-1zM192 726h1v1h-1zM192 707h1v1h-1zM192 688h1v1h-1zM192 669h1v1h-1zM192 650h1v1h-1zM192 632h1v1h-1zM192 613h1v1h-1zM192 594h1v1h-1zM192 575h1v1h-1zM192 556h1v1h-1zM192 537h1v1h-1zM192 519h1v1h-1zM192 500h1v1h-1zM192 481h1v1h-1zM192 462h1v1h-1zM192 443h1v1h-1zM192 424h1v1h-1zM192 406h1v1h-1zM192 387h1v1h-1zM192 368h1v1h-1zM192 349h1v1h-1zM192 330h1v1h-1zM192 311h1v1h-1zM192 293h1v1h-1zM192 274h1v1h-1zM192 255h1v1h-1zM192 236h1v1h-1zM192 217h1v1h-1zM192 198h1v1h-1zM192 180h1v1h-1zM192 161h1v1h-1zM211 726h1v1h-1zM211 707h1v1h-1zM211 688h1v1h-1zM211 669h1v1h-1zM211 650h1v1h-1zM211 632h1v1h-1zM211 613h1v1h-1zM211 594h1v1h-1zM211 575h1v1h-1zM211 556h1v1h-1zM211 537h1v1h-1zM211 519h1v1h-1zM211 500h1v1h-1zM211 481h1v1h-1zM211 462h1v1h-1zM211 443h1v1h-1zM211 424h1v1h-1zM211 406h1v1h-1zM211 387h1v1h-1zM211 368h1v1h-1zM211 349h1v1h-1zM211 330h1v1h-1zM211 311h1v1h-1zM211 293h1v1h-1zM211 274h1v1h-1zM211 255h1v1h-1zM211 236h1v1h-1zM211 217h1v1h-1zM211 198h1v1h-1zM211 180h1v1h-1zM211 161h1v1h-1zM230 726h1v1h-1zM230 707h1v1h-1zM230 688h1v1h-1zM230 669h1v1h-1zM230 650h1v1h-1zM230 632h1v1h-1zM230 613h1v1h-1zM230 594h1v1h-1zM230 575h1v1h-1zM230 556h1v1h-1zM230 537h1v1h-1zM230 519h1v1h-1zM230 500h1v1h-1zM230 481h1v1h-1zM230 462h1v1h-1zM230 443h1v1h-1zM230 424h1v1h-1zM230 406h1v1h-1zM230 387h1v1h-1zM230 368h1v1h-1zM230 349h1v1h-1zM230 330h1v1h-1zM230 311h1v1h-1zM230 293h1v1h-1zM230 274h1v1h-1zM230 255h1v1h-1zM230 236h1v1h-1zM230 217h1v1h-1zM230 198h1v1h-1zM230 180h1v1h-1zM230 161h1v1h-1zM249 726h1v1h-1zM249 707h1v1h-1zM249 688h1v1h-1zM249 669h1v1h-1zM249 650h1v1h-1zM249 632h1v1h-1zM249 613h1v1h-1zM249 594h1v1h-1zM249 575h1v1h-1zM249 556h1v1h-1zM249 537h1v1h-1zM249 519h1v1h-1zM249 500h1v1h-1zM249 481h1v1h-1zM249 462h1v1h-1zM249 443h1v1h-1zM249 424h1v1h-1zM249 406h1v1h-1zM249 387h1v1h-1zM249 368h1v1h-1zM249 349h1v1h-1zM249 330h1v1h-1zM249 311h1v1h-1zM249 293h1v1h-1zM249 274h1v1h-1zM249 255h1v1h-1zM249 236h1v1h-1zM249 217h1v1h-1zM249 198h1v1h-1zM249 180h1v1h-1zM249 161h1v1h-1zM267 726h1v1h-1zM267 707h1v1h-1zM267 688h1v1h-1zM267 669h1v1h-1zM267 650h1v1h-1zM267 632h1v1h-1zM267 613h1v1h-1zM267 594h1v1h-1zM267 575h1v1h-1zM267 556h1v1h-1zM267 537h1v1h-1zM267 519h1v1h-1zM267 500h1v1h-1zM267 481h1v1h-1zM267 462h1v1h-1zM267 443h1v1h-1zM267 424h1v1h-1zM267 406h1v1h-1zM267 387h1v1h-1zM267 368h1v1h-1zM267 349h1v1h-1zM267 330h1v1h-1zM267 311h1v1h-1zM267 293h1v1h-1zM267 274h1v1h-1zM267 255h1v1h-1zM267 236h1v1h-1zM267 217h1v1h-1zM267 198h1v1h-1zM267 180h1v1h-1zM267 161h1v1h-1zM286 726h1v1h-1zM286 707h1v1h-1zM286 688h1v1h-1zM286 669h1v1h-1zM286 650h1v1h-1zM286 632h1v1h-1zM286 613h1v1h-1zM286 594h1v1h-1zM286 575h1v1h-1zM286 556h1v1h-1zM286 537h1v1h-1zM286 519h1v1h-1zM286 500h1v1h-1zM286 481h1v1h-1zM286 462h1v1h-1zM286 443h1v1h-1zM286 424h1v1h-1zM286 406h1v1h-1zM286 387h1v1h-1zM286 368h1v1h-1zM286 349h1v1h-1zM286 330h1v1h-1zM286 311h1v1h-1zM286 293h1v1h-1zM286 274h1v1h-1zM286 255h1v1h-1zM286 236h1v1h-1zM286 217h1v1h-1zM286 198h1v1h-1zM286 180h1v1h-1zM286 161h1v1h-1zM305 726h1v1h-1zM305 707h1v1h-1zM305 688h1v1h-1zM305 669h1v1h-1zM305 650h1v1h-1zM305 632h1v1h-1zM305 613h1v1h-1zM305 594h1v1h-1zM305 575h1v1h-1zM305 556h1v1h-1zM305 537h1v1h-1zM305 519h1v1h-1zM305 500h1v1h-1zM305 481h1v1h-1zM305 462h1v1h-1zM305 443h1v1h-1zM305 424h1v1h-1zM305 406h1v1h-1zM305 387h1v1h-1zM305 368h1v1h-1zM305 349h1v1h-1zM305 330h1v1h-1zM305 311h1v1h-1zM305 293h1v1h-1zM305 274h1v1h-1zM305 255h1v1h-1zM305 236h1v1h-1zM305 217h1v1h-1zM305 198h1v1h-1zM305 180h1v1h-1zM305 161h1v1h-1zM324 726h1v1h-1zM324 707h1v1h-1zM324 688h1v1h-1zM324 669h1v1h-1zM324 650h1v1h-1zM324 632h1v1h-1zM324 613h1v1h-1zM324 594h1v1h-1zM324 575h1v1h-1zM324 556h1v1h-1zM324 537h1v1h-1zM324 519h1v1h-1zM324 500h1v1h-1zM324 481h1v1h-1zM324 462h1v1h-1zM324 443h1v1h-1zM324 424h1v1h-1zM324 406h1v1h-1zM324 387h1v1h-1zM324 368h1v1h-1zM324 349h1v1h-1zM324 330h1v1h-1zM324 311h1v1h-1zM324 293h1v1h-1zM324 274h1v1h-1zM324 255h1v1h-1zM324 236h1v1h-1zM324 217h1v1h-1zM324 198h1v1h-1zM324 180h1v1h-1zM324 161h1v1h-1zM343 726h1v1h-1zM343 707h1v1h-1zM343 688h1v1h-1zM343 669h1v1h-1zM343 650h1v1h-1zM343 632h1v1h-1zM343 613h1v1h-1zM343 594h1v1h-1zM343 575h1v1h-1zM343 556h1v1h-1zM343 537h1v1h-1zM343 519h1v1h-1zM343 500h1v1h-1zM343 481h1v1h-1zM343 462h1v1h-1zM343 443h1v1h-1zM343 424h1v1h-1zM343 406h1v1h-1zM343 387h1v1h-1zM343 368h1v1h-1zM343 349h1v1h-1zM343 330h1v1h-1zM343 311h1v1h-1zM343 293h1v1h-1zM343 274h1v1h-1zM343 255h1v1h-1zM343 236h1v1h-1zM343 217h1v1h-1zM343 198h1v1h-1zM343 180h1v1h-1zM343 161h1v1h-1zM362 726h1v1h-1zM362 707h1v1h-1zM362 688h1v1h-1zM362 669h1v1h-1zM362 650h1v1h-1zM362 632h1v1h-1zM362 613h1v1h-1zM362 594h1v1h-1zM362 575h1v1h-1zM362 556h1v1h-1zM362 537h1v1h-1zM362 519h1v1h-1zM362 500h1v1h-1zM362 481h1v1h-1zM362 462h1v1h-1zM362 443h1v1h-1zM362 424h1v1h-1zM362 406h1v1h-1zM362 387h1v1h-1zM362 368h1v1h-1zM362 349h1v1h-1zM362 330h1v1h-1zM362 311h1v1h-1zM362 293h1v1h-1zM362 274h1v1h-1zM362 255h1v1h-1zM362 236h1v1h-1zM362 217h1v1h-1zM362 198h1v1h-1zM362 180h1v1h-1zM362 161h1v1h-1zM380 726h1v1h-1zM380 707h1v1h-1zM380 688h1v1h-1zM380 669h1v1h-1zM380 650h1v1h-1zM380 632h1v1h-1zM380 613h1v1h-1zM380 594h1v1h-1zM380 575h1v1h-1zM380 556h1v1h-1zM380 537h1v1h-1zM380 519h1v1h-1zM380 500h1v1h-1zM380 481h1v1h-1zM380 462h1v1h-1zM380 443h1v1h-1zM380 424h1v1h-1zM380 406h1v1h-1zM380 387h1v1h-1zM380 368h1v1h-1zM380 349h1v1h-1zM380 330h1v1h-1zM380 311h1v1h-1zM380 293h1v1h-1zM380 274h1v1h-1zM380 255h1v1h-1zM380 236h1v1h-1zM380 217h1v1h-1zM380 198h1v1h-1zM380 180h1v1h-1zM380 161h1v1h-1zM399 726h1v1h-1zM399 707h1v1h-1zM399 688h1v1h-1zM399 669h1v1h-1zM399 650h1v1h-1zM399 632h1v1h-1zM399 613h1v1h-1zM399 594h1v1h-1zM399 575h1v1h-1zM399 556h1v1h-1zM399 537h1v1h-1zM399 519h1v1h-1zM399 500h1v1h-1zM399 481h1v1h-1zM399 462h1v1h-1zM399 443h1v1h-1zM399 424h1v1h-1zM399 406h1v1h-1zM399 387h1v1h-1zM399 368h1v1h-1zM399 349h1v1h-1zM399 330h1v1h-1zM399 311h1v1h-1zM399 293h1v1h-1zM399 274h1v1h-1zM399 255h1v1h-1zM399 236h1v1h-1zM399 217h1v1h-1zM399 198h1v1h-1zM399 180h1v1h-1zM399 161h1v1h-1zM418 726h1v1h-1zM418 707h1v1h-1zM418 688h1v1h-1zM418 669h1v1h-1zM418 650h1v1h-1zM418 632h1v1h-1zM418 613h1v1h-1zM418 594h1v1h-1zM418 575h1v1h-1zM418 556h1v1h-1zM418 537h1v1h-1zM418 519h1v1h-1zM418 500h1v1h-1zM418 481h1v1h-1zM418 462h1v1h-1zM418 443h1v1h-1zM418 424h1v1h-1zM418 406h1v1h-1zM418 387h1v1h-1zM418 368h1v1h-1zM418 349h1v1h-1zM418 330h1v1h-1zM418 311h1v1h-1zM418 293h1v1h-1zM418 274h1v1h-1zM418 255h1v1h-1zM418 236h1v1h-1zM418 217h1v1h-1zM418 198h1v1h-1zM418 180h1v1h-1zM418 161h1v1h-1zM437 726h1v1h-1zM437 707h1v1h-1zM437 688h1v1h-1zM437 669h1v1h-1zM437 650h1v1h-1zM437 632h1v1h-1zM437 613h1v1h-1zM437 594h1v1h-1zM437 575h1v1h-1zM437 556h1v1h-1zM437 537h1v1h-1zM437 519h1v1h-1zM437 500h1v1h-1zM437 481h1v1h-1zM437 462h1v1h-1zM437 443h1v1h-1zM437 424h1v1h-1zM437 406h1v1h-1zM437 387h1v1h-1zM437 368h1v1h-1zM437 349h1v1h-1zM437 330h1v1h-1zM437 311h1v1h-1zM437 293h1v1h-1zM437 274h1v1h-1zM437 255h1v1h-1zM437 236h1v1h-1zM437 217h1v1h-1zM437 198h1v1h-1zM437 180h1v1h-1zM437 161h1v1h-1zM456 726h1v1h-1zM456 707h1v1h-1zM456 688h1v1h-1zM456 669h1v1h-1zM456 650h1v1h-1zM456 632h1v1h-1zM456 613h1v1h-1zM456 594h1v1h-1zM456 575h1v1h-1zM456 556h1v1h-1zM456 537h1v1h-1zM456 519h1v1h-1zM456 500h1v1h-1zM456 481h1v1h-1zM456 462h1v1h-1zM456 443h1v1h-1zM456 424h1v1h-1zM456 406h1v1h-1zM456 387h1v1h-1zM456 368h1v1h-1zM456 349h1v1h-1zM456 330h1v1h-1zM456 311h1v1h-1zM456 293h1v1h-1zM456 274h1v1h-1zM456 255h1v1h-1zM456 236h1v1h-1zM456 217h1v1h-1zM456 198h1v1h-1zM456 180h1v1h-1zM456 161h1v1h-1zM474 726h1v1h-1zM474 707h1v1h-1zM474 688h1v1h-1zM474 669h1v1h-1zM474 650h1v1h-1zM474 632h1v1h-1zM474 613h1v1h-1zM474 594h1v1h-1zM474 575h1v1h-1zM474 556h1v1h-1zM474 537h1v1h-1zM474 519h1v1h-1zM474 500h1v1h-1zM474 481h1v1h-1zM474 462h1v1h-1zM474 443h1v1h-1zM474 424h1v1h-1zM474 406h1v1h-1zM474 387h1v1h-1zM474 368h1v1h-1zM474 349h1v1h-1zM474 330h1v1h-1zM474 311h1v1h-1zM474 293h1v1h-1zM474 274h1v1h-1zM474 255h1v1h-1zM474 236h1v1h-1zM474 217h1v1h-1zM474 198h1v1h-1zM474 180h1v1h-1zM474 161h1v1h-1zM493 726h1v1h-1zM493 707h1v1h-1zM493 688h1v1h-1zM493 669h1v1h-1zM493 650h1v1h-1zM493 632h1v1h-1zM493 613h1v1h-1zM493 594h1v1h-1zM493 575h1v1h-1zM493 556h1v1h-1zM493 537h1v1h-1zM493 519h1v1h-1zM493 500h1v1h-1zM493 481h1v1h-1zM493 462h1v1h-1zM493 443h1v1h-1zM493 424h1v1h-1zM493 406h1v1h-1zM493 387h1v1h-1zM493 368h1v1h-1zM493 349h1v1h-1zM493 330h1v1h-1zM493 311h1v1h-1zM493 293h1v1h-1zM493 274h1v1h-1zM493 255h1v1h-1zM493 236h1v1h-1zM493 217h1v1h-1zM493 198h1v1h-1zM493 180h1v1h-1zM493 161h1v1h-1zM512 726h1v1h-1zM512 707h1v1h-1zM512 688h1v1h-1zM512 669h1v1h-1zM512 650h1v1h-1zM512 632h1v1h-1zM512 613h1v1h-1zM512 594h1v1h-1zM512 575h1v1h-1zM512 556h1v1h-1zM512 537h1v1h-1zM512 519h1v1h-1zM512 500h1v1h-1zM512 481h1v1h-1zM512 462h1v1h-1zM512 443h1v1h-1zM512 424h1v1h-1zM512 406h1v1h-1zM512 387h1v1h-1zM512 368h1v1h-1zM512 349h1v1h-1zM512 330h1v1h-1zM512 311h1v1h-1zM512 293h1v1h-1zM512 274h1v1h-1zM512 255h1v1h-1zM512 236h1v1h-1zM512 217h1v1h-1zM512 198h1v1h-1zM512 180h1v1h-1zM512 161h1v1h-1zM531 726h1v1h-1zM531 707h1v1h-1zM531 688h1v1h-1zM531 669h1v1h-1zM531 650h1v1h-1zM531 632h1v1h-1zM531 613h1v1h-1zM531 594h1v1h-1zM531 575h1v1h-1zM531 556h1v1h-1zM531 537h1v1h-1zM531 519h1v1h-1zM531 500h1v1h-1zM531 481h1v1h-1zM531 462h1v1h-1zM531 443h1v1h-1zM531 424h1v1h-1zM531 406h1v1h-1zM531 387h1v1h-1zM531 368h1v1h-1zM531 349h1v1h-1zM531 330h1v1h-1zM531 311h1v1h-1zM531 293h1v1h-1zM531 274h1v1h-1zM531 255h1v1h-1zM531 236h1v1h-1zM531 217h1v1h-1zM531 198h1v1h-1zM531 180h1v1h-1zM531 161h1v1h-1zM550 726h1v1h-1zM550 707h1v1h-1zM550 688h1v1h-1zM550 669h1v1h-1zM550 650h1v1h-1zM550 632h1v1h-1zM550 613h1v1h-1zM550 594h1v1h-1zM550 575h1v1h-1zM550 556h1v1h-1zM550 537h1v1h-1zM550 519h1v1h-1zM550 500h1v1h-1zM550 481h1v1h-1zM550 462h1v1h-1zM550 443h1v1h-1zM550 424h1v1h-1zM550 406h1v1h-1zM550 387h1v1h-1zM550 368h1v1h-1zM550 349h1v1h-1zM550 330h1v1h-1zM550 311h1v1h-1zM550 293h1v1h-1zM550 274h1v1h-1zM550 255h1v1h-1zM550 236h1v1h-1zM550 217h1v1h-1zM550 198h1v1h-1zM550 180h1v1h-1zM550 161h1v1h-1zM569 726h1v1h-1zM569 707h1v1h-1zM569 688h1v1h-1zM569 669h1v1h-1zM569 650h1v1h-1zM569 632h1v1h-1zM569 613h1v1h-1zM569 594h1v1h-1zM569 575h1v1h-1zM569 556h1v1h-1zM569 537h1v1h-1zM569 519h1v1h-1zM569 500h1v1h-1zM569 481h1v1h-1zM569 462h1v1h-1zM569 443h1v1h-1zM569 424h1v1h-1zM569 406h1v1h-1zM569 387h1v1h-1zM569 368h1v1h-1zM569 349h1v1h-1zM569 330h1v1h-1zM569 311h1v1h-1zM569 293h1v1h-1zM569 274h1v1h-1zM569 255h1v1h-1zM569 236h1v1h-1zM569 217h1v1h-1zM569 198h1v1h-1zM569 180h1v1h-1zM569 161h1v1h-1zM587 726h1v1h-1zM587 707h1v1h-1zM587 688h1v1h-1zM587 669h1v1h-1zM587 650h1v1h-1zM587 632h1v1h-1zM587 613h1v1h-1zM587 594h1v1h-1zM587 575h1v1h-1zM587 556h1v1h-1zM587 537h1v1h-1zM587 519h1v1h-1zM587 500h1v1h-1zM587 481h1v1h-1zM587 462h1v1h-1zM587 443h1v1h-1zM587 424h1v1h-1zM587 406h1v1h-1zM587 387h1v1h-1zM587 368h1v1h-1zM587 349h1v1h-1zM587 330h1v1h-1zM587 311h1v1h-1zM587 293h1v1h-1zM587 274h1v1h-1zM587 255h1v1h-1zM587 236h1v1h-1zM587 217h1v1h-1zM587 198h1v1h-1zM587 180h1v1h-1zM587 161h1v1h-1zM606 726h1v1h-1zM606 707h1v1h-1zM606 688h1v1h-1zM606 669h1v1h-1zM606 650h1v1h-1zM606 632h1v1h-1zM606 613h1v1h-1zM606 594h1v1h-1zM606 575h1v1h-1zM606 556h1v1h-1zM606 537h1v1h-1zM606 519h1v1h-1zM606 500h1v1h-1zM606 481h1v1h-1zM606 462h1v1h-1zM606 443h1v1h-1zM606 424h1v1h-1zM606 406h1v1h-1zM606 387h1v1h-1zM606 368h1v1h-1zM606 349h1v1h-1zM606 330h1v1h-1zM606 311h1v1h-1zM606 293h1v1h-1zM606 274h1v1h-1zM606 255h1v1h-1zM606 236h1v1h-1zM606 217h1v1h-1zM606 198h1v1h-1zM606 180h1v1h-1zM606 161h1v1h-1zM625 726h1v1h-1zM625 707h1v1h-1zM625 688h1v1h-1zM625 669h1v1h-1zM625 650h1v1h-1zM625 632h1v1h-1zM625 613h1v1h-1zM625 594h1v1h-1zM625 575h1v1h-1zM625 556h1v1h-1zM625 537h1v1h-1zM625 519h1v1h-1zM625 500h1v1h-1zM625 481h1v1h-1zM625 462h1v1h-1zM625 443h1v1h-1zM625 424h1v1h-1zM625 406h1v1h-1zM625 387h1v1h-1zM625 368h1v1h-1zM625 349h1v1h-1zM625 330h1v1h-1zM625 311h1v1h-1zM625 293h1v1h-1zM625 274h1v1h-1zM625 255h1v1h-1zM625 236h1v1h-1zM625 217h1v1h-1zM625 198h1v1h-1zM625 180h1v1h-1zM625 161h1v1h-1zM644 726h1v1h-1zM644 707h1v1h-1zM644 688h1v1h-1zM644 669h1v1h-1zM644 650h1v1h-1zM644 632h1v1h-1zM644 613h1v1h-1zM644 594h1v1h-1zM644 575h1v1h-1zM644 556h1v1h-1zM644 537h1v1h-1zM644 519h1v1h-1zM644 500h1v1h-1zM644 481h1v1h-1zM644 462h1v1h-1zM644 443h1v1h-1zM644 424h1v1h-1zM644 406h1v1h-1zM644 387h1v1h-1zM644 368h1v1h-1zM644 349h1v1h-1zM644 330h1v1h-1zM644 311h1v1h-1zM644 293h1v1h-1zM644 274h1v1h-1zM644 255h1v1h-1zM644 236h1v1h-1zM644 217h1v1h-1zM644 198h1v1h-1zM644 180h1v1h-1zM644 161h1v1h-1zM663 726h1v1h-1zM663 707h1v1h-1zM663 688h1v1h-1zM663 669h1v1h-1zM663 650h1v1h-1zM663 632h1v1h-1zM663 613h1v1h-1zM663 594h1v1h-1zM663 575h1v1h-1zM663 556h1v1h-1zM663 537h1v1h-1zM663 519h1v1h-1zM663 500h1v1h-1zM663 481h1v1h-1zM663 462h1v1h-1zM663 443h1v1h-1zM663 424h1v1h-1zM663 406h1v1h-1zM663 387h1v1h-1zM663 368h1v1h-1zM663 349h1v1h-1zM663 330h1v1h-1zM663 311h1v1h-1zM663 293h1v1h-1zM663 274h1v1h-1zM663 255h1v1h-1zM663 236h1v1h-1zM663 217h1v1h-1zM663 198h1v1h-1zM663 180h1v1h-1zM663 161h1v1h-1zM682 726h1v1h-1zM682 707h1v1h-1zM682 688h1v1h-1zM682 669h1v1h-1zM682 650h1v1h-1zM682 632h1v1h-1zM682 613h1v1h-1zM682 594h1v1h-1zM682 575h1v1h-1zM682 556h1v1h-1zM682 537h1v1h-1zM682 519h1v1h-1zM682 500h1v1h-1zM682 481h1v1h-1zM682 462h1v1h-1zM682 443h1v1h-1zM682 424h1v1h-1zM682 406h1v1h-1zM682 387h1v1h-1zM682 368h1v1h-1zM682 349h1v1h-1zM682 330h1v1h-1zM682 311h1v1h-1zM682 293h1v1h-1zM682 274h1v1h-1zM682 255h1v1h-1zM682 236h1v1h-1zM682 217h1v1h-1zM682 198h1v1h-1zM682 180h1v1h-1zM682 161h1v1h-1zM700 726h1v1h-1zM700 707h1v1h-1zM700 688h1v1h-1zM700 669h1v1h-1zM700 650h1v1h-1zM700 632h1v1h-1zM700 613h1v1h-1zM700 594h1v1h-1zM700 575h1v1h-1zM700 556h1v1h-1zM700 537h1v1h-1zM700 519h1v1h-1zM700 500h1v1h-1zM700 481h1v1h-1zM700 462h1v1h-1zM700 443h1v1h-1zM700 424h1v1h-1zM700 406h1v1h-1zM700 387h1v1h-1zM700 368h1v1h-1zM700 349h1v1h-1zM700 330h1v1h-1zM700 311h1v1h-1zM700 293h1v1h-1zM700 274h1v1h-1zM700 255h1v1h-1zM700 236h1v1h-1zM700 217h1v1h-1zM700 198h1v1h-1zM700 180h1v1h-1zM700 161h1v1h-1zM719 726h1v1h-1zM719 707h1v1h-1zM719 688h1v1h-1zM719 669h1v1h-1zM719 650h1v1h-1zM719 632h1v1h-1zM719 613h1v1h-1zM719 594h1v1h-1zM719 575h1v1h-1zM719 556h1v1h-1zM719 537h1v1h-1zM719 519h1v1h-1zM719 500h1v1h-1zM719 481h1v1h-1zM719 462h1v1h-1zM719 443h1v1h-1zM719 424h1v1h-1zM719 406h1v1h-1zM719 387h1v1h-1zM719 368h1v1h-1zM719 349h1v1h-1zM719 330h1v1h-1zM719 311h1v1h-1zM719 293h1v1h-1zM719 274h1v1h-1zM719 255h1v1h-1zM719 236h1v1h-1zM719 217h1v1h-1zM719 198h1v1h-1zM719 180h1v1h-1zM719 161h1v1h-1zM738 726h1v1h-1zM738 707h1v1h-1zM738 688h1v1h-1zM738 669h1v1h-1zM738 650h1v1h-1zM738 632h1v1h-1zM738 613h1v1h-1zM738 594h1v1h-1zM738 575h1v1h-1zM738 556h1v1h-1zM738 537h1v1h-1zM738 519h1v1h-1zM738 500h1v1h-1zM738 481h1v1h-1zM738 462h1v1h-1zM738 443h1v1h-1zM738 424h1v1h-1zM738 406h1v1h-1zM738 387h1v1h-1zM738 368h1v1h-1zM738 349h1v1h-1zM738 330h1v1h-1zM738 311h1v1h-1zM738 293h1v1h-1zM738 274h1v1h-1zM738 255h1v1h-1zM738 236h1v1h-1zM738 217h1v1h-1zM738 198h1v1h-1zM738 180h1v1h-1zM738 161h1v1h-1zM757 726h1v1h-1zM757 707h1v1h-1zM757 688h1v1h-1zM757 669h1v1h-1zM757 650h1v1h-1zM757 632h1v1h-1zM757 613h1v1h-1zM757 594h1v1h-1zM757 575h1v1h-1zM757 556h1v1h-1zM757 537h1v1h-1zM757 519h1v1h-1zM757 500h1v1h-1zM757 481h1v1h-1zM757 462h1v1h-1zM757 443h1v1h-1zM757 424h1v1h-1zM757 406h1v1h-1zM757 387h1v1h-1zM757 368h1v1h-1zM757 349h1v1h-1zM757 330h1v1h-1zM757 311h1v1h-1zM757 293h1v1h-1zM757 274h1v1h-1zM757 255h1v1h-1zM757 236h1v1h-1zM757 217h1v1h-1zM757 198h1v1h-1zM757 180h1v1h-1zM757 161h1v1h-1zM776 726h1v1h-1zM776 707h1v1h-1zM776 688h1v1h-1zM776 669h1v1h-1zM776 650h1v1h-1zM776 632h1v1h-1zM776 613h1v1h-1zM776 594h1v1h-1zM776 575h1v1h-1zM776 556h1v1h-1zM776 537h1v1h-1zM776 519h1v1h-1zM776 500h1v1h-1zM776 481h1v1h-1zM776 462h1v1h-1zM776 443h1v1h-1zM776 424h1v1h-1zM776 406h1v1h-1zM776 387h1v1h-1zM776 368h1v1h-1zM776 349h1v1h-1zM776 330h1v1h-1zM776 311h1v1h-1zM776 293h1v1h-1zM776 274h1v1h-1zM776 255h1v1h-1zM776 236h1v1h-1zM776 217h1v1h-1zM776 198h1v1h-1zM776 180h1v1h-1zM776 161h1v1h-1zM795 726h1v1h-1zM795 707h1v1h-1zM795 688h1v1h-1zM795 669h1v1h-1zM795 650h1v1h-1zM795 632h1v1h-1zM795 613h1v1h-1zM795 594h1v1h-1zM795 575h1v1h-1zM795 556h1v1h-1zM795 537h1v1h-1zM795 519h1v1h-1zM795 500h1v1h-1zM795 481h1v1h-1zM795 462h1v1h-1zM795 443h1v1h-1zM795 424h1v1h-1zM795 406h1v1h-1zM795 387h1v1h-1zM795 368h1v1h-1zM795 349h1v1h-1zM795 330h1v1h-1zM795 311h1v1h-1zM795 293h1v1h-1zM795 274h1v1h-1zM795 255h1v1h-1zM795 236h1v1h-1zM795 217h1v1h-1zM795 198h1v1h-1zM795 180h1v1h-1zM795 161h1v1h-1zM813 726h1v1h-1zM813 707h1v1h-1zM813 688h1v1h-1zM813 669h1v1h-1zM813 650h1v1h-1zM813 632h1v1h-1zM813 613h1v1h-1zM813 594h1v1h-1zM813 575h1v1h-1zM813 556h1v1h-1zM813 537h1v1h-1zM813 519h1v1h-1zM813 500h1v1h-1zM813 481h1v1h-1zM813 462h1v1h-1zM813 443h1v1h-1zM813 424h1v1h-1zM813 406h1v1h-1zM813 387h1v1h-1zM813 368h1v1h-1zM813 349h1v1h-1zM813 330h1v1h-1zM813 311h1v1h-1zM813 293h1v1h-1zM813 274h1v1h-1zM813 255h1v1h-1zM813 236h1v1h-1zM813 217h1v1h-1zM813 198h1v1h-1zM813 180h1v1h-1zM813 161h1v1h-1zM832 726h1v1h-1zM832 707h1v1h-1zM832 688h1v1h-1zM832 669h1v1h-1zM832 650h1v1h-1zM832 632h1v1h-1zM832 613h1v1h-1zM832 594h1v1h-1zM832 575h1v1h-1zM832 556h1v1h-1zM832 537h1v1h-1zM832 519h1v1h-1zM832 500h1v1h-1zM832 481h1v1h-1zM832 462h1v1h-1zM832 443h1v1h-1zM832 424h1v1h-1zM832 406h1v1h-1zM832 387h1v1h-1zM832 368h1v1h-1zM832 349h1v1h-1zM832 330h1v1h-1zM832 311h1v1h-1zM832 293h1v1h-1zM832 274h1v1h-1zM832 255h1v1h-1zM832 236h1v1h-1zM832 217h1v1h-1zM832 198h1v1h-1zM832 180h1v1h-1zM832 161h1v1h-1zM851 726h1v1h-1zM851 707h1v1h-1zM851 688h1v1h-1zM851 669h1v1h-1zM851 650h1v1h-1zM851 632h1v1h-1zM851 613h1v1h-1zM851 594h1v1h-1zM851 575h1v1h-1zM851 556h1v1h-1zM851 537h1v1h-1zM851 519h1v1h-1zM851 500h1v1h-1zM851 481h1v1h-1zM851 462h1v1h-1zM851 443h1v1h-1zM851 424h1v1h-1zM851 406h1v1h-1zM851 387h1v1h-1zM851 368h1v1h-1zM851 349h1v1h-1zM851 330h1v1h-1zM851 311h1v1h-1zM851 293h1v1h-1zM851 274h1v1h-1zM851 255h1v1h-1zM851 236h1v1h-1zM851 217h1v1h-1zM851 198h1v1h-1zM851 180h1v1h-1zM851 161h1v1h-1zM870 726h1v1h-1zM870 707h1v1h-1zM870 688h1v1h-1zM870 669h1v1h-1zM870 650h1v1h-1zM870 632h1v1h-1zM870 613h1v1h-1zM870 594h1v1h-1zM870 575h1v1h-1zM870 556h1v1h-1zM870 537h1v1h-1zM870 519h1v1h-1zM870 500h1v1h-1zM870 481h1v1h-1zM870 462h1v1h-1zM870 443h1v1h-1zM870 424h1v1h-1zM870 406h1v1h-1zM870 387h1v1h-1zM870 368h1v1h-1zM870 349h1v1h-1zM870 330h1v1h-1zM870 311h1v1h-1zM870 293h1v1h-1zM870 274h1v1h-1zM870 255h1v1h-1zM870 236h1v1h-1zM870 217h1v1h-1zM870 198h1v1h-1zM870 180h1v1h-1zM870 161h1v1h-1zM889 726h1v1h-1zM889 707h1v1h-1zM889 688h1v1h-1zM889 669h1v1h-1zM889 650h1v1h-1zM889 632h1v1h-1zM889 613h1v1h-1zM889 594h1v1h-1zM889 575h1v1h-1zM889 556h1v1h-1zM889 537h1v1h-1zM889 519h1v1h-1zM889 500h1v1h-1zM889 481h1v1h-1zM889 462h1v1h-1zM889 443h1v1h-1zM889 424h1v1h-1zM889 406h1v1h-1zM889 387h1v1h-1zM889 368h1v1h-1zM889 349h1v1h-1zM889 330h1v1h-1zM889 311h1v1h-1zM889 293h1v1h-1zM889 274h1v1h-1zM889 255h1v1h-1zM889 236h1v1h-1zM889 217h1v1h-1zM889 198h1v1h-1zM889 180h1v1h-1zM889 161h1v1h-1zM908 726h1v1h-1zM908 707h1v1h-1zM908 688h1v1h-1zM908 669h1v1h-1zM908 650h1v1h-1zM908 632h1v1h-1zM908 613h1v1h-1zM908 594h1v1h-1zM908 575h1v1h-1zM908 556h1v1h-1zM908 537h1v1h-1zM908 519h1v1h-1zM908 500h1v1h-1zM908 481h1v1h-1zM908 462h1v1h-1zM908 443h1v1h-1zM908 424h1v1h-1zM908 406h1v1h-1zM908 387h1v1h-1zM908 368h1v1h-1zM908 349h1v1h-1zM908 330h1v1h-1zM908 311h1v1h-1zM908 293h1v1h-1zM908 274h1v1h-1zM908 255h1v1h-1zM908 236h1v1h-1zM908 217h1v1h-1zM908 198h1v1h-1zM908 180h1v1h-1zM908 161h1v1h-1zM926 726h1v1h-1zM926 707h1v1h-1zM926 688h1v1h-1zM926 669h1v1h-1zM926 650h1v1h-1zM926 632h1v1h-1zM926 613h1v1h-1zM926 594h1v1h-1zM926 575h1v1h-1zM926 556h1v1h-1zM926 537h1v1h-1zM926 519h1v1h-1zM926 500h1v1h-1zM926 481h1v1h-1zM926 462h1v1h-1zM926 443h1v1h-1zM926 424h1v1h-1zM926 406h1v1h-1zM926 387h1v1h-1zM926 368h1v1h-1zM926 349h1v1h-1zM926 330h1v1h-1zM926 311h1v1h-1zM926 293h1v1h-1zM926 274h1v1h-1zM926 255h1v1h-1zM926 236h1v1h-1zM926 217h1v1h-1zM926 198h1v1h-1zM926 180h1v1h-1zM926 161h1v1h-1zM945 726h1v1h-1zM945 707h1v1h-1zM945 688h1v1h-1zM945 669h1v1h-1zM945 650h1v1h-1zM945 632h1v1h-1zM945 613h1v1h-1zM945 594h1v1h-1zM945 575h1v1h-1zM945 556h1v1h-1zM945 537h1v1h-1zM945 519h1v1h-1zM945 500h1v1h-1zM945 481h1v1h-1zM945 462h1v1h-1zM945 443h1v1h-1zM945 424h1v1h-1zM945 406h1v1h-1zM945 387h1v1h-1zM945 368h1v1h-1zM945 349h1v1h-1zM945 330h1v1h-1zM945 311h1v1h-1zM945 293h1v1h-1zM945 274h1v1h-1zM945 255h1v1h-1zM945 236h1v1h-1zM945 217h1v1h-1zM945 198h1v1h-1zM945 180h1v1h-1zM945 161h1v1h-1zM964 726h1v1h-1zM964 707h1v1h-1zM964 688h1v1h-1zM964 669h1v1h-1zM964 650h1v1h-1zM964 632h1v1h-1zM964 613h1v1h-1zM964 594h1v1h-1zM964 575h1v1h-1zM964 556h1v1h-1zM964 537h1v1h-1zM964 519h1v1h-1zM964 500h1v1h-1zM964 481h1v1h-1zM964 462h1v1h-1zM964 443h1v1h-1zM964 424h1v1h-1zM964 406h1v1h-1zM964 387h1v1h-1zM964 368h1v1h-1zM964 349h1v1h-1zM964 330h1v1h-1zM964 311h1v1h-1zM964 293h1v1h-1zM964 274h1v1h-1zM964 255h1v1h-1zM964 236h1v1h-1zM964 217h1v1h-1zM964 198h1v1h-1zM964 180h1v1h-1zM964 161h1v1h-1zM983 726h1v1h-1zM983 707h1v1h-1zM983 688h1v1h-1zM983 669h1v1h-1zM983 650h1v1h-1zM983 632h1v1h-1zM983 613h1v1h-1zM983 594h1v1h-1zM983 575h1v1h-1zM983 556h1v1h-1zM983 537h1v1h-1zM983 519h1v1h-1zM983 500h1v1h-1zM983 481h1v1h-1zM983 462h1v1h-1zM983 443h1v1h-1zM983 424h1v1h-1zM983 406h1v1h-1zM983 387h1v1h-1zM983 368h1v1h-1zM983 349h1v1h-1zM983 330h1v1h-1zM983 311h1v1h-1zM983 293h1v1h-1zM983 274h1v1h-1zM983 255h1v1h-1zM983 236h1v1h-1zM983 217h1v1h-1zM983 198h1v1h-1zM983 180h1v1h-1zM983 161h1v1h-1zM1002 726h1v1h-1zM1002 707h1v1h-1zM1002 688h1v1h-1zM1002 669h1v1h-1zM1002 650h1v1h-1zM1002 632h1v1h-1zM1002 613h1v1h-1zM1002 594h1v1h-1zM1002 575h1v1h-1zM1002 556h1v1h-1zM1002 537h1v1h-1zM1002 519h1v1h-1zM1002 500h1v1h-1zM1002 481h1v1h-1zM1002 462h1v1h-1zM1002 443h1v1h-1zM1002 424h1v1h-1zM1002 406h1v1h-1zM1002 387h1v1h-1zM1002 368h1v1h-1zM1002 349h1v1h-1zM1002 330h1v1h-1zM1002 311h1v1h-1zM1002 293h1v1h-1zM1002 274h1v1h-1zM1002 255h1v1h-1zM1002 236h1v1h-1zM1002 217h1v1h-1zM1002 198h1v1h-1zM1002 180h1v1h-1zM1002 161h1v1h-1zM1021 726h1v1h-1zM1021 707h1v1h-1zM1021 688h1v1h-1zM1021 669h1v1h-1zM1021 650h1v1h-1zM1021 632h1v1h-1zM1021 613h1v1h-1zM1021 594h1v1h-1zM1021 575h1v1h-1zM1021 556h1v1h-1zM1021 537h1v1h-1zM1021 519h1v1h-1zM1021 500h1v1h-1zM1021 481h1v1h-1zM1021 462h1v1h-1zM1021 443h1v1h-1zM1021 424h1v1h-1zM1021 406h1v1h-1zM1021 387h1v1h-1zM1021 368h1v1h-1zM1021 349h1v1h-1zM1021 330h1v1h-1zM1021 311h1v1h-1zM1021 293h1v1h-1zM1021 274h1v1h-1zM1021 255h1v1h-1zM1021 236h1v1h-1zM1021 217h1v1h-1zM1021 198h1v1h-1zM1021 180h1v1h-1zM1021 161h1v1h-1zM1039 726h1v1h-1zM1039 707h1v1h-1zM1039 688h1v1h-1zM1039 669h1v1h-1zM1039 650h1v1h-1zM1039 632h1v1h-1zM1039 613h1v1h-1zM1039 594h1v1h-1zM1039 575h1v1h-1zM1039 556h1v1h-1zM1039 537h1v1h-1zM1039 519h1v1h-1zM1039 500h1v1h-1zM1039 481h1v1h-1zM1039 462h1v1h-1zM1039 443h1v1h-1zM1039 424h1v1h-1zM1039 406h1v1h-1zM1039 387h1v1h-1zM1039 368h1v1h-1zM1039 349h1v1h-1zM1039 330h1v1h-1zM1039 311h1v1h-1zM1039 293h1v1h-1zM1039 274h1v1h-1zM1039 255h1v1h-1zM1039 236h1v1h-1zM1039 217h1v1h-1zM1039 198h1v1h-1zM1039 180h1v1h-1zM1039 161h1v1h-1zM1058 726h1v1h-1zM1058 707h1v1h-1zM1058 688h1v1h-1zM1058 669h1v1h-1zM1058 650h1v1h-1zM1058 632h1v1h-1zM1058 613h1v1h-1zM1058 594h1v1h-1zM1058 575h1v1h-1zM1058 556h1v1h-1zM1058 537h1v1h-1zM1058 519h1v1h-1zM1058 500h1v1h-1zM1058 481h1v1h-1zM1058 462h1v1h-1zM1058 443h1v1h-1zM1058 424h1v1h-1zM1058 406h1v1h-1zM1058 387h1v1h-1zM1058 368h1v1h-1zM1058 349h1v1h-1zM1058 330h1v1h-1zM1058 311h1v1h-1zM1058 293h1v1h-1zM1058 274h1v1h-1zM1058 255h1v1h-1zM1058 236h1v1h-1zM1058 217h1v1h-1zM1058 198h1v1h-1zM1058 180h1v1h-1zM1058 161h1v1h-1zM1077 726h1v1h-1zM1077 707h1v1h-1zM1077 688h1v1h-1zM1077 669h1v1h-1zM1077 650h1v1h-1zM1077 632h1v1h-1zM1077 613h1v1h-1zM1077 594h1v1h-1zM1077 575h1v1h-1zM1077 556h1v1h-1zM1077 537h1v1h-1zM1077 519h1v1h-1zM1077 500h1v1h-1zM1077 481h1v1h-1zM1077 462h1v1h-1zM1077 443h1v1h-1zM1077 424h1v1h-1zM1077 406h1v1h-1zM1077 387h1v1h-1zM1077 368h1v1h-1zM1077 349h1v1h-1zM1077 330h1v1h-1zM1077 311h1v1h-1zM1077 293h1v1h-1zM1077 274h1v1h-1zM1077 255h1v1h-1zM1077 236h1v1h-1zM1077 217h1v1h-1zM1077 198h1v1h-1zM1077 180h1v1h-1zM1077 161h1v1h-1zM1096 726h1v1h-1zM1096 707h1v1h-1zM1096 688h1v1h-1zM1096 669h1v1h-1zM1096 650h1v1h-1zM1096 632h1v1h-1zM1096 613h1v1h-1zM1096 594h1v1h-1zM1096 575h1v1h-1zM1096 556h1v1h-1zM1096 537h1v1h-1zM1096 519h1v1h-1zM1096 500h1v1h-1zM1096 481h1v1h-1zM1096 462h1v1h-1zM1096 443h1v1h-1zM1096 424h1v1h-1zM1096 406h1v1h-1zM1096 387h1v1h-1zM1096 368h1v1h-1zM1096 349h1v1h-1zM1096 330h1v1h-1zM1096 311h1v1h-1zM1096 293h1v1h-1zM1096 274h1v1h-1zM1096 255h1v1h-1zM1096 236h1v1h-1zM1096 217h1v1h-1zM1096 198h1v1h-1zM1096 180h1v1h-1zM1096 161h1v1h-1zM1115 726h1v1h-1zM1115 707h1v1h-1zM1115 688h1v1h-1zM1115 669h1v1h-1zM1115 650h1v1h-1zM1115 632h1v1h-1zM1115 613h1v1h-1zM1115 594h1v1h-1zM1115 575h1v1h-1zM1115 556h1v1h-1zM1115 537h1v1h-1zM1115 519h1v1h-1zM1115 500h1v1h-1zM1115 481h1v1h-1zM1115 462h1v1h-1zM1115 443h1v1h-1zM1115 424h1v1h-1zM1115 406h1v1h-1zM1115 387h1v1h-1zM1115 368h1v1h-1zM1115 349h1v1h-1zM1115 330h1v1h-1zM1115 311h1v1h-1zM1115 293h1v1h-1zM1115 274h1v1h-1zM1115 255h1v1h-1zM1115 236h1v1h-1zM1115 217h1v1h-1zM1115 198h1v1h-1zM1115 180h1v1h-1zM1115 161h1v1h-1z" fill="#4a4a4a"/></svg>
<svg width="1023" height="577" viewBox="95 155 1023 577" style="position:absolute;left:95px;top:155px;display:block"><g stroke="#b00000" stroke-width="1" fill="none"><path d="M398.5 631.5H438.5M418.5 611.5V651.5"/><circle cx="418.5" cy="631.5" r="5"/></g><circle cx="606.5" cy="443.5" r="188.3" stroke="#d0d0d0" stroke-width="1" fill="none"/><circle cx="606.5" cy="443.5" r="169.5" stroke="#d0d0d0" stroke-width="1" fill="none"/><circle cx="606.5" cy="443.5" r="158.3" stroke="#6a1a1a" stroke-width="1" fill="none"/><circle cx="606.5" cy="443.5" r="146.8" stroke="#6a1a1a" stroke-width="1" fill="none"/><path d="M669.6 322.3H673.2V352.8H669.6V327.8L663.0 332.6L662.2 329.9Z" fill="#7a3a37"/><text x="700.0" y="397.7" font-family="Liberation Sans" font-size="46" fill="#7a3a37" stroke="#000" stroke-width="0.3">2</text><text x="716.4" y="458.9" font-family="Liberation Sans" font-size="46" fill="#7a3a37" stroke="#000" stroke-width="0.3">3</text><text x="700.0" y="520.1" font-family="Liberation Sans" font-size="46" fill="#7a3a37" stroke="#000" stroke-width="0.3">4</text><text x="655.2" y="564.9" font-family="Liberation Sans" font-size="46" fill="#7a3a37" stroke="#000" stroke-width="0.3">5</text><text x="594.0" y="581.3" font-family="Liberation Sans" font-size="46" fill="#7a3a37" stroke="#000" stroke-width="0.3">6</text><text x="532.8" y="564.9" font-family="Liberation Sans" font-size="46" fill="#7a3a37" stroke="#000" stroke-width="0.3">7</text><text x="488.0" y="520.1" font-family="Liberation Sans" font-size="46" fill="#7a3a37" stroke="#000" stroke-width="0.3">8</text><text x="471.6" y="458.9" font-family="Liberation Sans" font-size="46" fill="#7a3a37" stroke="#000" stroke-width="0.3">9</text><path d="M487.1 367.1H490.7V397.6H487.1V372.6L480.5 377.4L479.7 374.7Z" fill="#7a3a37"/><text x="498.2" y="397.7" font-family="Liberation Sans" font-size="46" fill="#7a3a37" stroke="#000" stroke-width="0.3">0</text><path d="M536.9 322.3H540.5V352.8H536.9V327.8L530.3 332.6L529.5 329.9Z" fill="#7a3a37"/><path d="M557.4 322.3H561.0V352.8H557.4V327.8L550.8 332.6L550.0 329.9Z" fill="#7a3a37"/><path d="M593.1 305.9H596.8V336.4H593.1V311.4L586.5 316.2L585.8 313.5Z" fill="#7a3a37"/><text x="604.2" y="336.5" font-family="Liberation Sans" font-size="46" fill="#7a3a37" stroke="#000" stroke-width="0.3">2</text><rect x="601.5" y="382.4" width="10" height="10" fill="#c8001e" stroke="#9a9a9a" stroke-width="0.8"/><rect x="607.4" y="382.7" width="10" height="10" fill="#c8001e" stroke="#9a9a9a" stroke-width="0.8"/><rect x="613.2" y="383.6" width="10" height="10" fill="#c8001e" stroke="#9a9a9a" stroke-width="0.8"/><rect x="618.8" y="385.1" width="10" height="10" fill="#c8001e" stroke="#9a9a9a" stroke-width="0.8"/><rect x="624.3" y="387.3" width="10" height="10" fill="#c8001e" stroke="#9a9a9a" stroke-width="0.8"/><rect x="629.5" y="389.9" width="10" height="10" fill="#c8001e" stroke="#9a9a9a" stroke-width="0.8"/><rect x="634.5" y="393.1" width="10" height="10" fill="#c8001e" stroke="#9a9a9a" stroke-width="0.8"/><rect x="639.0" y="396.8" width="10" height="10" fill="#c8001e" stroke="#9a9a9a" stroke-width="0.8"/><rect x="643.2" y="401.0" width="10" height="10" fill="#c8001e" stroke="#9a9a9a" stroke-width="0.8"/><rect x="646.9" y="405.5" width="10" height="10" fill="#c8001e" stroke="#9a9a9a" stroke-width="0.8"/><rect x="650.1" y="410.4" width="10" height="10" fill="#c8001e" stroke="#9a9a9a" stroke-width="0.8"/><rect x="652.7" y="415.7" width="10" height="10" fill="#c8001e" stroke="#9a9a9a" stroke-width="0.8"/><rect x="654.9" y="421.2" width="10" height="10" fill="#c8001e" stroke="#9a9a9a" stroke-width="0.8"/><rect x="656.4" y="426.8" width="10" height="10" fill="#c8001e" stroke="#9a9a9a" stroke-width="0.8"/><rect x="657.3" y="432.6" width="10" height="10" fill="#c8001e" stroke="#9a9a9a" stroke-width="0.8"/><rect x="657.6" y="438.5" width="10" height="10" fill="#c8001e" stroke="#9a9a9a" stroke-width="0.8"/><rect x="657.3" y="444.4" width="10" height="10" fill="#c8001e" stroke="#9a9a9a" stroke-width="0.8"/><rect x="656.4" y="450.2" width="10" height="10" fill="#c8001e" stroke="#9a9a9a" stroke-width="0.8"/><rect x="654.9" y="455.8" width="10" height="10" fill="#c8001e" stroke="#9a9a9a" stroke-width="0.8"/><rect x="652.7" y="461.3" width="10" height="10" fill="#c8001e" stroke="#9a9a9a" stroke-width="0.8"/><rect x="650.1" y="466.6" width="10" height="10" fill="#c8001e" stroke="#9a9a9a" stroke-width="0.8"/><rect x="646.9" y="471.5" width="10" height="10" fill="#c8001e" stroke="#9a9a9a" stroke-width="0.8"/><rect x="643.2" y="476.0" width="10" height="10" fill="#c8001e" stroke="#9a9a9a" stroke-width="0.8"/><rect x="639.0" y="480.2" width="10" height="10" fill="#c8001e" stroke="#9a9a9a" stroke-width="0.8"/><rect x="634.5" y="483.9" width="10" height="10" fill="#c8001e" stroke="#9a9a9a" stroke-width="0.8"/><rect x="629.5" y="487.1" width="10" height="10" fill="#c8001e" stroke="#9a9a9a" stroke-width="0.8"/><rect x="624.3" y="489.7" width="10" height="10" fill="#c8001e" stroke="#9a9a9a" stroke-width="0.8"/><rect x="618.8" y="491.9" width="10" height="10" fill="#c8001e" stroke="#9a9a9a" stroke-width="0.8"/><rect x="613.2" y="493.4" width="10" height="10" fill="#c8001e" stroke="#9a9a9a" stroke-width="0.8"/><rect x="607.4" y="494.3" width="10" height="10" fill="#c8001e" stroke="#9a9a9a" stroke-width="0.8"/><rect x="601.5" y="494.6" width="10" height="10" fill="#c8001e" stroke="#9a9a9a" stroke-width="0.8"/><rect x="595.6" y="494.3" width="10" height="10" fill="#c8001e" stroke="#9a9a9a" stroke-width="0.8"/><rect x="589.8" y="493.4" width="10" height="10" fill="#c8001e" stroke="#9a9a9a" stroke-width="0.8"/><rect x="584.2" y="491.9" width="10" height="10" fill="#c8001e" stroke="#9a9a9a" stroke-width="0.8"/><rect x="578.7" y="489.7" width="10" height="10" fill="#c8001e" stroke="#9a9a9a" stroke-width="0.8"/><rect x="573.5" y="487.1" width="10" height="10" fill="#c8001e" stroke="#9a9a9a" stroke-width="0.8"/><rect x="568.5" y="483.9" width="10" height="10" fill="#c8001e" stroke="#9a9a9a" stroke-width="0.8"/><rect x="564.0" y="480.2" width="10" height="10" fill="#c8001e" stroke="#9a9a9a" stroke-width="0.8"/><rect x="559.8" y="476.0" width="10" height="10" fill="#c8001e" stroke="#9a9a9a" stroke-width="0.8"/><rect x="556.1" y="471.5" width="10" height="10" fill="#c8001e" stroke="#9a9a9a" stroke-width="0.8"/><rect x="552.9" y="466.6" width="10" height="10" fill="#c8001e" stroke="#9a9a9a" stroke-width="0.8"/><rect x="550.3" y="461.3" width="10" height="10" fill="#c8001e" stroke="#9a9a9a" stroke-width="0.8"/><rect x="548.1" y="455.8" width="10" height="10" fill="#c8001e" stroke="#9a9a9a" stroke-width="0.8"/><rect x="546.6" y="450.2" width="10" height="10" fill="#c8001e" stroke="#9a9a9a" stroke-width="0.8"/><rect x="545.7" y="444.4" width="10" height="10" fill="#c8001e" stroke="#9a9a9a" stroke-width="0.8"/><rect x="545.4" y="438.5" width="10" height="10" fill="#c8001e" stroke="#9a9a9a" stroke-width="0.8"/><rect x="545.7" y="432.6" width="10" height="10" fill="#c8001e" stroke="#9a9a9a" stroke-width="0.8"/><rect x="546.6" y="426.8" width="10" height="10" fill="#c8001e" stroke="#9a9a9a" stroke-width="0.8"/><rect x="548.1" y="421.2" width="10" height="10" fill="#c8001e" stroke="#9a9a9a" stroke-width="0.8"/><rect x="550.3" y="415.7" width="10" height="10" fill="#c8001e" stroke="#9a9a9a" stroke-width="0.8"/><rect x="552.9" y="410.4" width="10" height="10" fill="#c8001e" stroke="#9a9a9a" stroke-width="0.8"/><rect x="556.1" y="405.5" width="10" height="10" fill="#c8001e" stroke="#9a9a9a" stroke-width="0.8"/><rect x="559.8" y="401.0" width="10" height="10" fill="#c8001e" stroke="#9a9a9a" stroke-width="0.8"/><rect x="564.0" y="396.8" width="10" height="10" fill="#c8001e" stroke="#9a9a9a" stroke-width="0.8"/><rect x="568.5" y="393.1" width="10" height="10" fill="#c8001e" stroke="#9a9a9a" stroke-width="0.8"/><rect x="573.4" y="389.9" width="10" height="10" fill="#c8001e" stroke="#9a9a9a" stroke-width="0.8"/><rect x="578.7" y="387.3" width="10" height="10" fill="#c8001e" stroke="#9a9a9a" stroke-width="0.8"/><rect x="584.2" y="385.1" width="10" height="10" fill="#c8001e" stroke="#9a9a9a" stroke-width="0.8"/><rect x="589.8" y="383.6" width="10" height="10" fill="#c8001e" stroke="#9a9a9a" stroke-width="0.8"/><rect x="595.6" y="382.7" width="10" height="10" fill="#c8001e" stroke="#9a9a9a" stroke-width="0.8"/><rect x="601.5" y="370.7" width="10" height="10" fill="#0000b4" stroke="#9a9a9a" stroke-width="0.8"/><rect x="608.6" y="371.1" width="10" height="10" fill="#0000b4" stroke="#9a9a9a" stroke-width="0.8"/><rect x="615.6" y="372.2" width="10" height="10" fill="#0000b4" stroke="#9a9a9a" stroke-width="0.8"/><rect x="622.5" y="374.0" width="10" height="10" fill="#0000b4" stroke="#9a9a9a" stroke-width="0.8"/><rect x="629.1" y="376.6" width="10" height="10" fill="#0000b4" stroke="#9a9a9a" stroke-width="0.8"/><rect x="635.4" y="379.8" width="10" height="10" fill="#0000b4" stroke="#9a9a9a" stroke-width="0.8"/><rect x="641.4" y="383.6" width="10" height="10" fill="#0000b4" stroke="#9a9a9a" stroke-width="0.8"/><rect x="646.9" y="388.1" width="10" height="10" fill="#0000b4" stroke="#9a9a9a" stroke-width="0.8"/><rect x="651.9" y="393.1" width="10" height="10" fill="#0000b4" stroke="#9a9a9a" stroke-width="0.8"/><rect x="656.4" y="398.6" width="10" height="10" fill="#0000b4" stroke="#9a9a9a" stroke-width="0.8"/><rect x="660.2" y="404.6" width="10" height="10" fill="#0000b4" stroke="#9a9a9a" stroke-width="0.8"/><rect x="663.4" y="410.9" width="10" height="10" fill="#0000b4" stroke="#9a9a9a" stroke-width="0.8"/><rect x="666.0" y="417.5" width="10" height="10" fill="#0000b4" stroke="#9a9a9a" stroke-width="0.8"/><rect x="667.8" y="424.4" width="10" height="10" fill="#0000b4" stroke="#9a9a9a" stroke-width="0.8"/><rect x="668.9" y="431.4" width="10" height="10" fill="#0000b4" stroke="#9a9a9a" stroke-width="0.8"/><rect x="669.3" y="438.5" width="10" height="10" fill="#0000b4" stroke="#9a9a9a" stroke-width="0.8"/><rect x="668.9" y="445.6" width="10" height="10" fill="#0000b4" stroke="#9a9a9a" stroke-width="0.8"/><rect x="667.8" y="452.6" width="10" height="10" fill="#0000b4" stroke="#9a9a9a" stroke-width="0.8"/><rect x="666.0" y="459.5" width="10" height="10" fill="#0000b4" stroke="#9a9a9a" stroke-width="0.8"/><rect x="663.4" y="466.1" width="10" height="10" fill="#0000b4" stroke="#9a9a9a" stroke-width="0.8"/><rect x="660.2" y="472.4" width="10" height="10" fill="#0000b4" stroke="#9a9a9a" stroke-width="0.8"/><rect x="656.4" y="478.4" width="10" height="10" fill="#0000b4" stroke="#9a9a9a" stroke-width="0.8"/><rect x="651.9" y="483.9" width="10" height="10" fill="#0000b4" stroke="#9a9a9a" stroke-width="0.8"/><rect x="646.9" y="488.9" width="10" height="10" fill="#0000b4" stroke="#9a9a9a" stroke-width="0.8"/><rect x="641.4" y="493.4" width="10" height="10" fill="#0000b4" stroke="#9a9a9a" stroke-width="0.8"/><rect x="635.4" y="497.2" width="10" height="10" fill="#0000b4" stroke="#9a9a9a" stroke-width="0.8"/><rect x="629.1" y="500.4" width="10" height="10" fill="#0000b4" stroke="#9a9a9a" stroke-width="0.8"/><rect x="622.5" y="503.0" width="10" height="10" fill="#0000b4" stroke="#9a9a9a" stroke-width="0.8"/><rect x="615.6" y="504.8" width="10" height="10" fill="#0000b4" stroke="#9a9a9a" stroke-width="0.8"/><rect x="608.6" y="505.9" width="10" height="10" fill="#0000b4" stroke="#9a9a9a" stroke-width="0.8"/><rect x="601.5" y="506.3" width="10" height="10" fill="#0000b4" stroke="#9a9a9a" stroke-width="0.8"/><rect x="594.4" y="505.9" width="10" height="10" fill="#0000b4" stroke="#9a9a9a" stroke-width="0.8"/><rect x="587.4" y="504.8" width="10" height="10" fill="#0000b4" stroke="#9a9a9a" stroke-width="0.8"/><rect x="580.5" y="503.0" width="10" height="10" fill="#0000b4" stroke="#9a9a9a" stroke-width="0.8"/><rect x="573.9" y="500.4" width="10" height="10" fill="#0000b4" stroke="#9a9a9a" stroke-width="0.8"/><rect x="567.6" y="497.2" width="10" height="10" fill="#0000b4" stroke="#9a9a9a" stroke-width="0.8"/><rect x="561.6" y="493.4" width="10" height="10" fill="#0000b4" stroke="#9a9a9a" stroke-width="0.8"/><rect x="556.1" y="488.9" width="10" height="10" fill="#0000b4" stroke="#9a9a9a" stroke-width="0.8"/><rect x="551.1" y="483.9" width="10" height="10" fill="#0000b4" stroke="#9a9a9a" stroke-width="0.8"/><rect x="546.6" y="478.4" width="10" height="10" fill="#0000b4" stroke="#9a9a9a" stroke-width="0.8"/><rect x="542.8" y="472.4" width="10" height="10" fill="#0000b4" stroke="#9a9a9a" stroke-width="0.8"/><rect x="539.6" y="466.1" width="10" height="10" fill="#0000b4" stroke="#9a9a9a" stroke-width="0.8"/><rect x="537.0" y="459.5" width="10" height="10" fill="#0000b4" stroke="#9a9a9a" stroke-width="0.8"/><rect x="535.2" y="452.6" width="10" height="10" fill="#0000b4" stroke="#9a9a9a" stroke-width="0.8"/><rect x="534.1" y="445.6" width="10" height="10" fill="#0000b4" stroke="#9a9a9a" stroke-width="0.8"/><rect x="533.7" y="438.5" width="10" height="10" fill="#0000b4" stroke="#9a9a9a" stroke-width="0.8"/><rect x="534.1" y="431.4" width="10" height="10" fill="#0000b4" stroke="#9a9a9a" stroke-width="0.8"/><rect x="535.2" y="424.4" width="10" height="10" fill="#0000b4" stroke="#9a9a9a" stroke-width="0.8"/><rect x="537.0" y="417.5" width="10" height="10" fill="#0000b4" stroke="#9a9a9a" stroke-width="0.8"/><rect x="539.6" y="410.9" width="10" height="10" fill="#0000b4" stroke="#9a9a9a" stroke-width="0.8"/><rect x="542.8" y="404.6" width="10" height="10" fill="#0000b4" stroke="#9a9a9a" stroke-width="0.8"/><rect x="546.6" y="398.6" width="10" height="10" fill="#0000b4" stroke="#9a9a9a" stroke-width="0.8"/><rect x="551.1" y="393.1" width="10" height="10" fill="#0000b4" stroke="#9a9a9a" stroke-width="0.8"/><rect x="556.1" y="388.1" width="10" height="10" fill="#0000b4" stroke="#9a9a9a" stroke-width="0.8"/><rect x="561.6" y="383.6" width="10" height="10" fill="#0000b4" stroke="#9a9a9a" stroke-width="0.8"/><rect x="567.6" y="379.8" width="10" height="10" fill="#0000b4" stroke="#9a9a9a" stroke-width="0.8"/><rect x="573.9" y="376.6" width="10" height="10" fill="#0000b4" stroke="#9a9a9a" stroke-width="0.8"/><rect x="580.5" y="374.0" width="10" height="10" fill="#0000b4" stroke="#9a9a9a" stroke-width="0.8"/><rect x="587.4" y="372.2" width="10" height="10" fill="#0000b4" stroke="#9a9a9a" stroke-width="0.8"/><rect x="594.4" y="371.1" width="10" height="10" fill="#0000b4" stroke="#9a9a9a" stroke-width="0.8"/><rect x="601.5" y="295.5" width="10" height="10" fill="#0000b4" stroke="#9a9a9a" stroke-width="0.8"/><rect x="601.5" y="276.4" width="10" height="10" fill="#0000b4" stroke="#9a9a9a" stroke-width="0.8"/><rect x="597.3" y="285.9" width="10" height="10" fill="#0000b4" stroke="#9a9a9a" stroke-width="0.8"/><rect x="605.7" y="285.9" width="10" height="10" fill="#0000b4" stroke="#9a9a9a" stroke-width="0.8"/><rect x="616.8" y="292.5" width="10" height="10" fill="#c8001e" stroke="#9a9a9a" stroke-width="0.8"/><rect x="618.0" y="281.1" width="10" height="10" fill="#0000b4" stroke="#9a9a9a" stroke-width="0.8"/><rect x="632.0" y="294.9" width="10" height="10" fill="#c8001e" stroke="#9a9a9a" stroke-width="0.8"/><rect x="634.4" y="283.7" width="10" height="10" fill="#0000b4" stroke="#9a9a9a" stroke-width="0.8"/><rect x="646.9" y="298.9" width="10" height="10" fill="#c8001e" stroke="#9a9a9a" stroke-width="0.8"/><rect x="650.4" y="287.9" width="10" height="10" fill="#0000b4" stroke="#9a9a9a" stroke-width="0.8"/><rect x="661.2" y="304.4" width="10" height="10" fill="#c8001e" stroke="#9a9a9a" stroke-width="0.8"/><rect x="665.9" y="293.9" width="10" height="10" fill="#0000b4" stroke="#9a9a9a" stroke-width="0.8"/><rect x="673.0" y="314.7" width="10" height="10" fill="#0000b4" stroke="#9a9a9a" stroke-width="0.8"/><rect x="682.5" y="298.1" width="10" height="10" fill="#0000b4" stroke="#9a9a9a" stroke-width="0.8"/><rect x="674.2" y="304.2" width="10" height="10" fill="#0000b4" stroke="#9a9a9a" stroke-width="0.8"/><rect x="681.4" y="308.4" width="10" height="10" fill="#0000b4" stroke="#9a9a9a" stroke-width="0.8"/><rect x="687.8" y="319.7" width="10" height="10" fill="#c8001e" stroke="#9a9a9a" stroke-width="0.8"/><rect x="694.5" y="310.4" width="10" height="10" fill="#0000b4" stroke="#9a9a9a" stroke-width="0.8"/><rect x="699.7" y="329.4" width="10" height="10" fill="#c8001e" stroke="#9a9a9a" stroke-width="0.8"/><rect x="707.4" y="320.9" width="10" height="10" fill="#0000b4" stroke="#9a9a9a" stroke-width="0.8"/><rect x="710.6" y="340.3" width="10" height="10" fill="#c8001e" stroke="#9a9a9a" stroke-width="0.8"/><rect x="719.1" y="332.6" width="10" height="10" fill="#0000b4" stroke="#9a9a9a" stroke-width="0.8"/><rect x="720.3" y="352.2" width="10" height="10" fill="#c8001e" stroke="#9a9a9a" stroke-width="0.8"/><rect x="729.6" y="345.5" width="10" height="10" fill="#0000b4" stroke="#9a9a9a" stroke-width="0.8"/><rect x="725.3" y="367.0" width="10" height="10" fill="#0000b4" stroke="#9a9a9a" stroke-width="0.8"/><rect x="741.9" y="357.4" width="10" height="10" fill="#0000b4" stroke="#9a9a9a" stroke-width="0.8"/><rect x="731.6" y="358.6" width="10" height="10" fill="#0000b4" stroke="#9a9a9a" stroke-width="0.8"/><rect x="735.8" y="365.8" width="10" height="10" fill="#0000b4" stroke="#9a9a9a" stroke-width="0.8"/><rect x="735.6" y="378.8" width="10" height="10" fill="#c8001e" stroke="#9a9a9a" stroke-width="0.8"/><rect x="746.1" y="374.1" width="10" height="10" fill="#0000b4" stroke="#9a9a9a" stroke-width="0.8"/><rect x="741.1" y="393.1" width="10" height="10" fill="#c8001e" stroke="#9a9a9a" stroke-width="0.8"/><rect x="752.1" y="389.6" width="10" height="10" fill="#0000b4" stroke="#9a9a9a" stroke-width="0.8"/><rect x="745.1" y="408.0" width="10" height="10" fill="#c8001e" stroke="#9a9a9a" stroke-width="0.8"/><rect x="756.3" y="405.6" width="10" height="10" fill="#0000b4" stroke="#9a9a9a" stroke-width="0.8"/><rect x="747.5" y="423.2" width="10" height="10" fill="#c8001e" stroke="#9a9a9a" stroke-width="0.8"/><rect x="758.9" y="422.0" width="10" height="10" fill="#0000b4" stroke="#9a9a9a" stroke-width="0.8"/><rect x="744.5" y="438.5" width="10" height="10" fill="#0000b4" stroke="#9a9a9a" stroke-width="0.8"/><rect x="763.6" y="438.5" width="10" height="10" fill="#0000b4" stroke="#9a9a9a" stroke-width="0.8"/><rect x="754.1" y="434.3" width="10" height="10" fill="#0000b4" stroke="#9a9a9a" stroke-width="0.8"/><rect x="754.1" y="442.7" width="10" height="10" fill="#0000b4" stroke="#9a9a9a" stroke-width="0.8"/><rect x="747.5" y="453.8" width="10" height="10" fill="#c8001e" stroke="#9a9a9a" stroke-width="0.8"/><rect x="758.9" y="455.0" width="10" height="10" fill="#0000b4" stroke="#9a9a9a" stroke-width="0.8"/><rect x="745.1" y="469.0" width="10" height="10" fill="#c8001e" stroke="#9a9a9a" stroke-width="0.8"/><rect x="756.3" y="471.4" width="10" height="10" fill="#0000b4" stroke="#9a9a9a" stroke-width="0.8"/><rect x="741.1" y="483.9" width="10" height="10" fill="#c8001e" stroke="#9a9a9a" stroke-width="0.8"/><rect x="752.1" y="487.4" width="10" height="10" fill="#0000b4" stroke="#9a9a9a" stroke-width="0.8"/><rect x="735.6" y="498.2" width="10" height="10" fill="#c8001e" stroke="#9a9a9a" stroke-width="0.8"/><rect x="746.1" y="502.9" width="10" height="10" fill="#0000b4" stroke="#9a9a9a" stroke-width="0.8"/><rect x="725.3" y="510.0" width="10" height="10" fill="#0000b4" stroke="#9a9a9a" stroke-width="0.8"/><rect x="741.9" y="519.5" width="10" height="10" fill="#0000b4" stroke="#9a9a9a" stroke-width="0.8"/><rect x="735.8" y="511.2" width="10" height="10" fill="#0000b4" stroke="#9a9a9a" stroke-width="0.8"/><rect x="731.6" y="518.4" width="10" height="10" fill="#0000b4" stroke="#9a9a9a" stroke-width="0.8"/><rect x="720.3" y="524.8" width="10" height="10" fill="#c8001e" stroke="#9a9a9a" stroke-width="0.8"/><rect x="729.6" y="531.5" width="10" height="10" fill="#0000b4" stroke="#9a9a9a" stroke-width="0.8"/><rect x="710.6" y="536.7" width="10" height="10" fill="#c8001e" stroke="#9a9a9a" stroke-width="0.8"/><rect x="719.1" y="544.4" width="10" height="10" fill="#0000b4" stroke="#9a9a9a" stroke-width="0.8"/><rect x="699.7" y="547.6" width="10" height="10" fill="#c8001e" stroke="#9a9a9a" stroke-width="0.8"/><rect x="707.4" y="556.1" width="10" height="10" fill="#0000b4" stroke="#9a9a9a" stroke-width="0.8"/><rect x="687.8" y="557.3" width="10" height="10" fill="#c8001e" stroke="#9a9a9a" stroke-width="0.8"/><rect x="694.5" y="566.6" width="10" height="10" fill="#0000b4" stroke="#9a9a9a" stroke-width="0.8"/><rect x="673.0" y="562.3" width="10" height="10" fill="#0000b4" stroke="#9a9a9a" stroke-width="0.8"/><rect x="682.5" y="578.9" width="10" height="10" fill="#0000b4" stroke="#9a9a9a" stroke-width="0.8"/><rect x="681.4" y="568.6" width="10" height="10" fill="#0000b4" stroke="#9a9a9a" stroke-width="0.8"/><rect x="674.2" y="572.8" width="10" height="10" fill="#0000b4" stroke="#9a9a9a" stroke-width="0.8"/><rect x="661.2" y="572.6" width="10" height="10" fill="#c8001e" stroke="#9a9a9a" stroke-width="0.8"/><rect x="665.9" y="583.1" width="10" height="10" fill="#0000b4" stroke="#9a9a9a" stroke-width="0.8"/><rect x="646.9" y="578.1" width="10" height="10" fill="#c8001e" stroke="#9a9a9a" stroke-width="0.8"/><rect x="650.4" y="589.1" width="10" height="10" fill="#0000b4" stroke="#9a9a9a" stroke-width="0.8"/><rect x="632.0" y="582.1" width="10" height="10" fill="#c8001e" stroke="#9a9a9a" stroke-width="0.8"/><rect x="634.4" y="593.3" width="10" height="10" fill="#0000b4" stroke="#9a9a9a" stroke-width="0.8"/><rect x="616.8" y="584.5" width="10" height="10" fill="#c8001e" stroke="#9a9a9a" stroke-width="0.8"/><rect x="618.0" y="595.9" width="10" height="10" fill="#0000b4" stroke="#9a9a9a" stroke-width="0.8"/><rect x="601.5" y="581.5" width="10" height="10" fill="#0000b4" stroke="#9a9a9a" stroke-width="0.8"/><rect x="601.5" y="600.6" width="10" height="10" fill="#0000b4" stroke="#9a9a9a" stroke-width="0.8"/><rect x="605.7" y="591.1" width="10" height="10" fill="#0000b4" stroke="#9a9a9a" stroke-width="0.8"/><rect x="597.3" y="591.1" width="10" height="10" fill="#0000b4" stroke="#9a9a9a" stroke-width="0.8"/><rect x="586.2" y="584.5" width="10" height="10" fill="#c8001e" stroke="#9a9a9a" stroke-width="0.8"/><rect x="585.0" y="595.9" width="10" height="10" fill="#0000b4" stroke="#9a9a9a" stroke-width="0.8"/><rect x="571.0" y="582.1" width="10" height="10" fill="#c8001e" stroke="#9a9a9a" stroke-width="0.8"/><rect x="568.6" y="593.3" width="10" height="10" fill="#0000b4" stroke="#9a9a9a" stroke-width="0.8"/><rect x="556.1" y="578.1" width="10" height="10" fill="#c8001e" stroke="#9a9a9a" stroke-width="0.8"/><rect x="552.6" y="589.1" width="10" height="10" fill="#0000b4" stroke="#9a9a9a" stroke-width="0.8"/><rect x="541.8" y="572.6" width="10" height="10" fill="#c8001e" stroke="#9a9a9a" stroke-width="0.8"/><rect x="537.1" y="583.1" width="10" height="10" fill="#0000b4" stroke="#9a9a9a" stroke-width="0.8"/><rect x="530.0" y="562.3" width="10" height="10" fill="#0000b4" stroke="#9a9a9a" stroke-width="0.8"/><rect x="520.5" y="578.9" width="10" height="10" fill="#0000b4" stroke="#9a9a9a" stroke-width="0.8"/><rect x="528.8" y="572.8" width="10" height="10" fill="#0000b4" stroke="#9a9a9a" stroke-width="0.8"/><rect x="521.6" y="568.6" width="10" height="10" fill="#0000b4" stroke="#9a9a9a" stroke-width="0.8"/><rect x="515.2" y="557.3" width="10" height="10" fill="#c8001e" stroke="#9a9a9a" stroke-width="0.8"/><rect x="508.5" y="566.6" width="10" height="10" fill="#0000b4" stroke="#9a9a9a" stroke-width="0.8"/><rect x="503.3" y="547.6" width="10" height="10" fill="#c8001e" stroke="#9a9a9a" stroke-width="0.8"/><rect x="495.6" y="556.1" width="10" height="10" fill="#0000b4" stroke="#9a9a9a" stroke-width="0.8"/><rect x="492.4" y="536.7" width="10" height="10" fill="#c8001e" stroke="#9a9a9a" stroke-width="0.8"/><rect x="483.9" y="544.4" width="10" height="10" fill="#0000b4" stroke="#9a9a9a" stroke-width="0.8"/><rect x="482.7" y="524.8" width="10" height="10" fill="#c8001e" stroke="#9a9a9a" stroke-width="0.8"/><rect x="473.4" y="531.5" width="10" height="10" fill="#0000b4" stroke="#9a9a9a" stroke-width="0.8"/><rect x="477.7" y="510.0" width="10" height="10" fill="#0000b4" stroke="#9a9a9a" stroke-width="0.8"/><rect x="461.1" y="519.6" width="10" height="10" fill="#0000b4" stroke="#9a9a9a" stroke-width="0.8"/><rect x="471.4" y="518.4" width="10" height="10" fill="#0000b4" stroke="#9a9a9a" stroke-width="0.8"/><rect x="467.2" y="511.2" width="10" height="10" fill="#0000b4" stroke="#9a9a9a" stroke-width="0.8"/><rect x="467.4" y="498.2" width="10" height="10" fill="#c8001e" stroke="#9a9a9a" stroke-width="0.8"/><rect x="456.9" y="502.9" width="10" height="10" fill="#0000b4" stroke="#9a9a9a" stroke-width="0.8"/><rect x="461.9" y="483.9" width="10" height="10" fill="#c8001e" stroke="#9a9a9a" stroke-width="0.8"/><rect x="450.9" y="487.4" width="10" height="10" fill="#0000b4" stroke="#9a9a9a" stroke-width="0.8"/><rect x="457.9" y="469.0" width="10" height="10" fill="#c8001e" stroke="#9a9a9a" stroke-width="0.8"/><rect x="446.7" y="471.4" width="10" height="10" fill="#0000b4" stroke="#9a9a9a" stroke-width="0.8"/><rect x="455.5" y="453.8" width="10" height="10" fill="#c8001e" stroke="#9a9a9a" stroke-width="0.8"/><rect x="444.1" y="455.0" width="10" height="10" fill="#0000b4" stroke="#9a9a9a" stroke-width="0.8"/><rect x="458.5" y="438.5" width="10" height="10" fill="#0000b4" stroke="#9a9a9a" stroke-width="0.8"/><rect x="439.4" y="438.5" width="10" height="10" fill="#0000b4" stroke="#9a9a9a" stroke-width="0.8"/><rect x="448.9" y="442.7" width="10" height="10" fill="#0000b4" stroke="#9a9a9a" stroke-width="0.8"/><rect x="448.9" y="434.3" width="10" height="10" fill="#0000b4" stroke="#9a9a9a" stroke-width="0.8"/><rect x="455.5" y="423.2" width="10" height="10" fill="#c8001e" stroke="#9a9a9a" stroke-width="0.8"/><rect x="444.1" y="422.0" width="10" height="10" fill="#0000b4" stroke="#9a9a9a" stroke-width="0.8"/><rect x="457.9" y="408.0" width="10" height="10" fill="#c8001e" stroke="#9a9a9a" stroke-width="0.8"/><rect x="446.7" y="405.6" width="10" height="10" fill="#0000b4" stroke="#9a9a9a" stroke-width="0.8"/><rect x="461.9" y="393.1" width="10" height="10" fill="#c8001e" stroke="#9a9a9a" stroke-width="0.8"/><rect x="450.9" y="389.6" width="10" height="10" fill="#0000b4" stroke="#9a9a9a" stroke-width="0.8"/><rect x="467.4" y="378.8" width="10" height="10" fill="#c8001e" stroke="#9a9a9a" stroke-width="0.8"/><rect x="456.9" y="374.1" width="10" height="10" fill="#0000b4" stroke="#9a9a9a" stroke-width="0.8"/><rect x="477.7" y="367.0" width="10" height="10" fill="#0000b4" stroke="#9a9a9a" stroke-width="0.8"/><rect x="461.1" y="357.4" width="10" height="10" fill="#0000b4" stroke="#9a9a9a" stroke-width="0.8"/><rect x="467.2" y="365.8" width="10" height="10" fill="#0000b4" stroke="#9a9a9a" stroke-width="0.8"/><rect x="471.4" y="358.6" width="10" height="10" fill="#0000b4" stroke="#9a9a9a" stroke-width="0.8"/><rect x="482.7" y="352.2" width="10" height="10" fill="#c8001e" stroke="#9a9a9a" stroke-width="0.8"/><rect x="473.4" y="345.5" width="10" height="10" fill="#0000b4" stroke="#9a9a9a" stroke-width="0.8"/><rect x="492.4" y="340.3" width="10" height="10" fill="#c8001e" stroke="#9a9a9a" stroke-width="0.8"/><rect x="483.9" y="332.6" width="10" height="10" fill="#0000b4" stroke="#9a9a9a" stroke-width="0.8"/><rect x="503.3" y="329.4" width="10" height="10" fill="#c8001e" stroke="#9a9a9a" stroke-width="0.8"/><rect x="495.6" y="320.9" width="10" height="10" fill="#0000b4" stroke="#9a9a9a" stroke-width="0.8"/><rect x="515.2" y="319.7" width="10" height="10" fill="#c8001e" stroke="#9a9a9a" stroke-width="0.8"/><rect x="508.5" y="310.4" width="10" height="10" fill="#0000b4" stroke="#9a9a9a" stroke-width="0.8"/><rect x="530.0" y="314.7" width="10" height="10" fill="#0000b4" stroke="#9a9a9a" stroke-width="0.8"/><rect x="520.4" y="298.1" width="10" height="10" fill="#0000b4" stroke="#9a9a9a" stroke-width="0.8"/><rect x="521.6" y="308.4" width="10" height="10" fill="#0000b4" stroke="#9a9a9a" stroke-width="0.8"/><rect x="528.8" y="304.2" width="10" height="10" fill="#0000b4" stroke="#9a9a9a" stroke-width="0.8"/><rect x="541.8" y="304.4" width="10" height="10" fill="#c8001e" stroke="#9a9a9a" stroke-width="0.8"/><rect x="537.1" y="293.9" width="10" height="10" fill="#0000b4" stroke="#9a9a9a" stroke-width="0.8"/><rect x="556.1" y="298.9" width="10" height="10" fill="#c8001e" stroke="#9a9a9a" stroke-width="0.8"/><rect x="552.6" y="287.9" width="10" height="10" fill="#0000b4" stroke="#9a9a9a" stroke-width="0.8"/><rect x="571.0" y="294.9" width="10" height="10" fill="#c8001e" stroke="#9a9a9a" stroke-width="0.8"/><rect x="568.6" y="283.7" width="10" height="10" fill="#0000b4" stroke="#9a9a9a" stroke-width="0.8"/><rect x="586.2" y="292.5" width="10" height="10" fill="#c8001e" stroke="#9a9a9a" stroke-width="0.8"/><rect x="585.0" y="281.1" width="10" height="10" fill="#0000b4" stroke="#9a9a9a" stroke-width="0.8"/><rect x="662.7" y="332.5" width="10" height="10" fill="#0000b4" stroke="#9a9a9a" stroke-width="0.8"/><rect x="707.5" y="377.3" width="10" height="10" fill="#0000b4" stroke="#9a9a9a" stroke-width="0.8"/><rect x="723.9" y="438.5" width="10" height="10" fill="#0000b4" stroke="#9a9a9a" stroke-width="0.8"/><rect x="707.5" y="499.7" width="10" height="10" fill="#0000b4" stroke="#9a9a9a" stroke-width="0.8"/><rect x="662.7" y="544.5" width="10" height="10" fill="#0000b4" stroke="#9a9a9a" stroke-width="0.8"/><rect x="601.5" y="560.9" width="10" height="10" fill="#0000b4" stroke="#9a9a9a" stroke-width="0.8"/><rect x="540.3" y="544.5" width="10" height="10" fill="#0000b4" stroke="#9a9a9a" stroke-width="0.8"/><rect x="495.5" y="499.7" width="10" height="10" fill="#0000b4" stroke="#9a9a9a" stroke-width="0.8"/><rect x="479.1" y="438.5" width="10" height="10" fill="#0000b4" stroke="#9a9a9a" stroke-width="0.8"/><rect x="495.5" y="377.3" width="10" height="10" fill="#0000b4" stroke="#9a9a9a" stroke-width="0.8"/><rect x="540.3" y="332.5" width="10" height="10" fill="#0000b4" stroke="#9a9a9a" stroke-width="0.8"/><rect x="601.5" y="316.1" width="10" height="10" fill="#0000b4" stroke="#9a9a9a" stroke-width="0.8"/><rect x="601.5" y="433.5" width="10" height="10" fill="#0a88b8" stroke="#9a9a9a" stroke-width="0.8"/><rect x="596.5" y="438.5" width="10" height="10" fill="#0a88b8" stroke="#9a9a9a" stroke-width="0.8"/><rect x="606.5" y="438.5" width="10" height="10" fill="#0a88b8" stroke="#9a9a9a" stroke-width="0.8"/><rect x="601.5" y="443.5" width="10" height="10" fill="#0a88b8" stroke="#9a9a9a" stroke-width="0.8"/><defs><radialGradient id="ring" cx="0.5" cy="0.5" r="0.5"><stop offset="0.74" stop-color="#56677a" stop-opacity="0"/><stop offset="0.82" stop-color="#56677a" stop-opacity="0.55"/><stop offset="0.88" stop-color="#5d6e80"/><stop offset="0.93" stop-color="#6b7b8b"/><stop offset="0.97" stop-color="#5a6a7a"/><stop offset="1" stop-color="#4a5866" stop-opacity="0.6"/></radialGradient></defs><circle cx="870" cy="611.7" r="39.3" fill="url(#ring)"/><path d="M869.5 611.2 L869.5 634.8 L874.6 630.4 L879.2 640.2 L884.6 637.9 L880.2 628.8 L886.6 628.2 Z" fill="#fff" stroke="#fff" stroke-width="2.6" stroke-linejoin="round"/><path d="M869.5 611.2 L869.5 634.8 L874.6 630.4 L879.2 640.2 L884.6 637.9 L880.2 628.8 L886.6 628.2 Z" fill="#fff" stroke="#000" stroke-width="0.9" stroke-linejoin="round"/></svg>
<div class="b" style="left:1118px;top:155px;width:15px;height:577px;background:#fafafa"></div>
<div class="b" style="left:1123px;top:304px;width:8px;height:279px;background:#808080;border-radius:4px"></div>
<div class="b" style="left:95px;top:732px;width:968px;height:16px;background:#fafafa"></div>
<div class="b" style="left:161px;top:737px;width:836px;height:8px;background:#808080;border-radius:4px"></div>
<div class="b" style="left:1063px;top:732px;width:70px;height:16px;background:#ececec"></div>
<div class="t" style="right:367px;top:734.1px;font-size:12.6px;color:#111;">10 &lt; 100</div>
<div class="b" style="left:72px;top:748px;width:1061px;height:23px;background:#fff;border-top:1px solid #c8c8c8;border-bottom:1px solid #bdbdbd"></div>
<div class="t" style="left:77px;top:751.5px;font-size:13.4px;color:#1414dc;"><i>Comando:</i> line</div>
<div class="b" style="left:72px;top:771px;width:1061px;height:27px;background:#ececec"></div>
<div class="t" style="left:73px;top:778.9px;font-size:13.4px;color:#111;">Comando:</div>
<div class="b" style="left:138px;top:776px;width:969px;height:18px;background:#fff"></div>
<div class="b" style="left:1107px;top:772px;width:26px;height:26px;background:linear-gradient(#f6f6f6,#e8e8e8);border:1px solid #c4c4c4"></div>
<svg style="left:1113px;top:780px" width="15" height="11" viewBox="0 0 15 11" shape-rendering="crispEdges"><rect x="0.5" y="0.5" width="13" height="9" fill="#fff" stroke="#000"/><rect x="0" y="0" width="14" height="3" fill="#000"/></svg>
<div class="b" style="left:1133px;top:108px;width:11px;height:690px;background:#ececec"></div>
<div class="b" style="left:1144px;top:108px;width:11px;height:690px;background:#e3e3e3"></div>
<div class="b" style="left:1135px;top:327px;width:20px;height:132px;background:#1a84ff;border-radius:5px 0 0 5px"></div>
<div class="b" style="left:1135px;top:463px;width:20px;height:118px;background:#d3d3d3;border-radius:5px 0 0 5px"></div>
<div class="t" style="left:1135px;top:327px;width:20px;height:132px;"><div style="position:absolute;left:10px;top:66px;transform:translate(-50%,-50%) rotate(-90deg);font-size:13.5px;color:#fff;white-space:nowrap">Editor di proprietà</div></div>
<div class="t" style="left:1135px;top:463px;width:20px;height:118px;"><div style="position:absolute;left:10px;top:59px;transform:translate(-50%,-50%) rotate(-90deg);font-size:13.5px;color:#222;white-space:nowrap">Elenco dei livelli</div></div>
<div class="b" style="left:1155px;top:108px;width:300px;height:690px;background:#ececec;border-left:1px solid #d4d4d4;border-right:1px solid #d0d0d0"></div><div class="b" style="left:1155px;top:108px;width:300px;height:23px;background:linear-gradient(#ebebeb,#d9d9d9 85%,#c6c6c6);border-bottom:1px solid #b8b8b8;border-left:1px solid #d4d4d4"></div><div class="b" style="left:1156px;top:131px;width:298px;height:1px;background:#f2f2f2"></div><svg style="left:1156px;top:110px" width="34" height="16" viewBox="0 0 34 16"><circle cx="8" cy="8" r="7" fill="#5a5a5a"/><path d="M5 5 L11 11 M11 5 L5 11" stroke="#fff" stroke-width="1.8"/><circle cx="26" cy="8" r="7" fill="#5a5a5a"/><rect x="23.5" y="7" width="6" height="4.5" fill="none" stroke="#fff" stroke-width="1"/><path d="M25 5.5 h6 v4.5" fill="none" stroke="#fff" stroke-width="1"/></svg><div class="t" style="left:1322px;top:112.7px;font-size:11.8px;color:#2a2a2a;transform:translateX(-50%)">Editor di proprietà</div><div class="t" style="left:1168.5px;top:147.6px;font-size:13px;color:#111;">Selezione:</div><div class="b" style="left:1238px;top:143px;width:204px;height:22px;background:#fff;border:1px solid #cfd3da;border-radius:6px"></div><div class="t" style="left:1242px;top:147.6px;font-size:13px;color:#111;">Tutto (149)</div><div class="b" style="left:1423px;top:146px;width:16px;height:16px;background:#1a84ff;border-radius:4px"></div><svg style="left:1423px;top:146px" width="16" height="16" viewBox="0 0 16 16"><path d="M5 6.5 L8 3.5 L11 6.5 M5 9.5 L8 12.5 L11 9.5" stroke="#fff" stroke-width="1.4" fill="none"/></svg><div class="t" style="left:1175px;top:170.5px;font-size:11.8px;color:#1a1a1a;">Proprietà generali</div><div class="b" style="left:1168px;top:183px;width:274px;height:186px;background:#e3e3e3;border-radius:6px"></div><div class="t" style="right:215px;top:199.6px;font-size:13px;color:#111;">Livello:</div><div class="t" style="right:215px;top:225.5px;font-size:13px;color:#111;">Colore:</div><div class="t" style="right:215px;top:249.5px;font-size:13px;color:#111;">Spessore di linea:</div><div class="t" style="right:215px;top:273.3px;font-size:13px;color:#111;">Tipo di linea:</div><div class="t" style="right:215px;top:297.3px;font-size:13px;color:#111;">Scala del tipo:</div><div class="t" style="right:215px;top:320.5px;font-size:13px;color:#111;">Ordine di disegno:</div><div class="t" style="right:215px;top:343.5px;font-size:13px;color:#111;">Manico:</div><div class="b" style="left:1289px;top:196px;width:115px;height:21px;background:#fff;border:1px solid #d6d6d6;border-radius:5px"></div><div class="b" style="left:1386px;top:198px;width:16px;height:16px;background:#1a84ff;border-radius:4px"></div><svg style="left:1386px;top:198px" width="16" height="16" viewBox="0 0 16 16"><path d="M5 6.5 L8 3.5 L11 6.5 M5 9.5 L8 12.5 L11 9.5" stroke="#fff" stroke-width="1.4" fill="none"/></svg><div class="b" style="left:1407px;top:193px;width:26px;height:26px;background:#f2f2f2;border:1px solid #b0b0b0"></div><svg style="left:1407px;top:193px" width="26" height="26" viewBox="0 0 26 26"><path d="M7 9h12M7 13h12M7 17h12" stroke="#666" stroke-width="1.6"/></svg><svg style="left:1292px;top:201px" width="17" height="11" viewBox="0 0 17 11" shape-rendering="crispEdges"><rect x="0.5" y="0.5" width="15" height="9" fill="#fff" stroke="#222"/></svg><div class="t" style="left:1314px;top:199.6px;font-size:13px;color:#111;">0</div><div class="b" style="left:1289px;top:222px;width:143px;height:21px;background:#fff;border:1px solid #d6d6d6;border-radius:5px"></div><div class="b" style="left:1414px;top:224px;width:16px;height:16px;background:#1a84ff;border-radius:4px"></div><svg style="left:1414px;top:224px" width="16" height="16" viewBox="0 0 16 16"><path d="M5 6.5 L8 3.5 L11 6.5 M5 9.5 L8 12.5 L11 9.5" stroke="#fff" stroke-width="1.4" fill="none"/></svg><div class="b" style="left:1289px;top:246px;width:143px;height:21px;background:#fff;border:1px solid #d6d6d6;border-radius:5px"></div><div class="b" style="left:1414px;top:248px;width:16px;height:16px;background:#1a84ff;border-radius:4px"></div><svg style="left:1414px;top:248px" width="16" height="16" viewBox="0 0 16 16"><path d="M5 6.5 L8 3.5 L11 6.5 M5 9.5 L8 12.5 L11 9.5" stroke="#fff" stroke-width="1.4" fill="none"/></svg><div class="b" style="left:1289px;top:270px;width:143px;height:21px;background:#fff;border:1px solid #d6d6d6;border-radius:5px"></div><div class="b" style="left:1414px;top:272px;width:16px;height:16px;background:#1a84ff;border-radius:4px"></div><svg style="left:1414px;top:272px" width="16" height="16" viewBox="0 0 16 16"><path d="M5 6.5 L8 3.5 L11 6.5 M5 9.5 L8 12.5 L11 9.5" stroke="#fff" stroke-width="1.4" fill="none"/></svg><svg style="left:1292px;top:227px" width="17" height="11" viewBox="0 0 17 11" shape-rendering="crispEdges"><rect x="0.5" y="0.5" width="15" height="9" fill="#fff" stroke="#222"/></svg><svg style="left:1292px;top:255px" width="17" height="3" viewBox="0 0 17 3" shape-rendering="crispEdges"><rect x="0" y="0.5" width="16" height="1" fill="#222"/></svg><div class="t" style="left:1314px;top:225.5px;font-size:13px;color:#111;">Da livello</div><div class="t" style="left:1314px;top:249.5px;font-size:13px;color:#111;">Da livello</div><div class="t" style="left:1291px;top:273.3px;font-size:13px;color:#111;">Da livello</div><div class="b" style="left:1289px;top:294px;width:143px;height:20px;background:#fff;border-bottom:1px solid #c8c8c8;border-top:1px solid #e8e8e8"></div><div class="b" style="left:1289px;top:317px;width:143px;height:20px;background:#fff;border-bottom:1px solid #c8c8c8;border-top:1px solid #e8e8e8"></div><div class="b" style="left:1289px;top:340px;width:143px;height:20px;background:#fff;border-bottom:1px solid #c8c8c8;border-top:1px solid #e8e8e8"></div><div class="t" style="left:1291px;top:297.3px;font-size:13px;color:#111;">1</div><div class="t" style="left:1291px;top:320.5px;font-size:13px;color:#111;">*VARIE*</div><div class="t" style="left:1291px;top:343.5px;font-size:13px;color:#b8b8b8;">*VARIE*</div><div class="t" style="left:1175px;top:374.6px;font-size:11.8px;color:#1a1a1a;">Proprietà specifiche</div><div class="b" style="left:1168px;top:387px;width:274px;height:19px;background:#e3e3e3;border-radius:6px"></div><div class="t" style="left:1175px;top:411.7px;font-size:11.8px;color:#1a1a1a;">Personalizzato</div><div class="b" style="left:1168px;top:424px;width:274px;height:53px;background:#e3e3e3;border-radius:6px"></div><div class="b" style="left:1405px;top:440px;width:22px;height:22px;background:#f6f6f6;border:1px solid #a8a8a8"></div><svg style="left:1405px;top:440px" width="22" height="22" viewBox="0 0 22 22"><path d="M11 6v10M6 11h10" stroke="#d00000" stroke-width="2.2"/></svg>
<div class="b" style="left:1455px;top:108px;width:45px;height:690px;background:linear-gradient(90deg,#f8f8f8 0px,#ececec 2px,#c8c8c8 43px,#b9b9b9 43px);border-left:1px solid #d0d0d0"></div><div class="b" style="left:1456px;top:120px;width:42px;height:42px;background:#b9b9b9;border-radius:6px"></div><div class="b" style="left:1456px;top:269px;width:42px;height:42px;background:#b9b9b9;border-radius:6px"></div><div class="b" style="left:1456px;top:419px;width:42px;height:41px;background:#b9b9b9;border-radius:6px"></div><svg style="left:1455px;top:0" width="45" height="520" viewBox="1455 0 45 520" shape-rendering="geometricPrecision"><rect x="1463" y="116" width="2" height="2" fill="#999"/><rect x="1469" y="116" width="2" height="2" fill="#999"/><rect x="1475" y="116" width="2" height="2" fill="#999"/><rect x="1481" y="116" width="2" height="2" fill="#999"/><rect x="1487" y="116" width="2" height="2" fill="#999"/><rect x="1456" y="261" width="1" height="1" fill="#666"/><rect x="1459" y="261" width="1" height="1" fill="#666"/><rect x="1462" y="261" width="1" height="1" fill="#666"/><rect x="1465" y="261" width="1" height="1" fill="#666"/><rect x="1468" y="261" width="1" height="1" fill="#666"/><rect x="1471" y="261" width="1" height="1" fill="#666"/><rect x="1474" y="261" width="1" height="1" fill="#666"/><rect x="1477" y="261" width="1" height="1" fill="#666"/><rect x="1480" y="261" width="1" height="1" fill="#666"/><rect x="1483" y="261" width="1" height="1" fill="#666"/><rect x="1486" y="261" width="1" height="1" fill="#666"/><rect x="1489" y="261" width="1" height="1" fill="#666"/><rect x="1492" y="261" width="1" height="1" fill="#666"/><rect x="1495" y="261" width="1" height="1" fill="#666"/><rect x="1498" y="261" width="1" height="1" fill="#666"/><rect x="1456" y="410" width="1" height="1" fill="#666"/><rect x="1459" y="410" width="1" height="1" fill="#666"/><rect x="1462" y="410" width="1" height="1" fill="#666"/><rect x="1465" y="410" width="1" height="1" fill="#666"/><rect x="1468" y="410" width="1" height="1" fill="#666"/><rect x="1471" y="410" width="1" height="1" fill="#666"/><rect x="1474" y="410" width="1" height="1" fill="#666"/><rect x="1477" y="410" width="1" height="1" fill="#666"/><rect x="1480" y="410" width="1" height="1" fill="#666"/><rect x="1483" y="410" width="1" height="1" fill="#666"/><rect x="1486" y="410" width="1" height="1" fill="#666"/><rect x="1489" y="410" width="1" height="1" fill="#666"/><rect x="1492" y="410" width="1" height="1" fill="#666"/><rect x="1495" y="410" width="1" height="1" fill="#666"/><rect x="1498" y="410" width="1" height="1" fill="#666"/><g transform="translate(1463,127)"><rect x="0.5" y="0.5" width="27" height="27" fill="#fff" stroke="#222"/><rect x="0" y="0" width="28" height="5" fill="#000"/><rect x="1.5" y="1" width="3" height="3" fill="#fff"/><path d="M8 12 l8-3 v10 l-8 3z" fill="#bbb" stroke="#444" stroke-width="0.8"/><path d="M12 11 l8-3 v10 l-8 3z" fill="#fff" stroke="#444" stroke-width="0.8"/><path d="M14 18 l4-7 l1 6z" fill="none" stroke="#e33" stroke-width="0.8"/></g><g transform="translate(1463,174)"><rect x="0.5" y="0.5" width="27" height="27" fill="#fff" stroke="#222"/><rect x="0" y="0" width="28" height="5" fill="#000"/><rect x="1.5" y="1" width="3" height="3" fill="#fff"/><rect x="6" y="10" width="11" height="9" fill="#f6eab8" stroke="#444" stroke-width="0.8"/><circle cx="16" cy="18" r="4.5" fill="#f1e2a8" fill-opacity="0.8" stroke="#444" stroke-width="0.8"/></g><g transform="translate(1463,220)"><rect x="0.5" y="0.5" width="27" height="27" fill="#fff" stroke="#222"/><rect x="0" y="0" width="28" height="5" fill="#000"/><rect x="1.5" y="1" width="3" height="3" fill="#fff"/><rect x="5" y="10" width="18" height="12" rx="2.5" fill="#f4f4f4" stroke="#b5c6e0" stroke-width="0.8"/></g><g transform="translate(1463,276)"><rect x="0.5" y="0.5" width="27" height="27" fill="#fff" stroke="#222"/><rect x="0" y="0" width="28" height="5" fill="#000"/><rect x="1.5" y="1" width="3" height="3" fill="#fff"/><rect x="3" y="9" width="4" height="3" fill="#000"/><rect x="3" y="15" width="4" height="3" fill="#000"/><rect x="3" y="21" width="4" height="3" fill="#000"/><rect x="9.5" y="9" width="15" height="3.5" fill="none" stroke="#222" stroke-width="0.8"/><rect x="9.5" y="15" width="15" height="3.5" fill="none" stroke="#222" stroke-width="0.8"/><rect x="9.5" y="21" width="15" height="3.5" fill="none" stroke="#222" stroke-width="0.8"/></g><g transform="translate(1463,323)"><rect x="0.5" y="0.5" width="27" height="27" fill="#fff" stroke="#222"/><rect x="0" y="0" width="28" height="5" fill="#000"/><rect x="1.5" y="1" width="3" height="3" fill="#fff"/><path d="M6 9 h16 l-6 7 v7 l-4 2 v-9z" fill="#ddd" stroke="#333" stroke-width="0.9"/></g><g transform="translate(1463,368)"><rect x="0.5" y="0.5" width="27" height="27" fill="#fff" stroke="#222"/><rect x="0" y="0" width="28" height="5" fill="#000"/><rect x="1.5" y="1" width="3" height="3" fill="#fff"/><path d="M6 10 l8 5 h8 v6 h-8 l-8 5z" fill="#f4f4f4" stroke="#333" stroke-width="0.9"/><rect x="14" y="15" width="8" height="6" fill="#888"/><path d="M3 18h22" stroke="#e77" stroke-width="0.6" stroke-dasharray="1.5 1"/></g><g transform="translate(1463,425)"><rect x="0.5" y="0.5" width="27" height="27" fill="#fff" stroke="#222"/><rect x="0" y="0" width="28" height="5" fill="#000"/><rect x="1.5" y="1" width="3" height="3" fill="#fff"/><path d="M4 9h14M4 12h12M4 15h14M4 18h13" stroke="#888" stroke-width="0.7"/><path d="M0 22.5h28" stroke="#222" stroke-width="0.8"/><path d="M4 25.5h3M11 25.5h12" stroke="#555" stroke-width="0.8"/></g><g transform="translate(1463,471)"><rect x="0.5" y="0.5" width="27" height="27" fill="#fff" stroke="#222"/><rect x="0" y="0" width="28" height="5" fill="#000"/><rect x="1.5" y="1" width="3" height="3" fill="#fff"/><rect x="7.5" y="10.5" width="13" height="15" fill="#c59a55" stroke="#8c6a33" stroke-width="0.8"/><rect x="9.5" y="12.5" width="9" height="11" fill="#f4f4f4"/><rect x="11" y="9" width="6" height="3" fill="#888"/></g></svg>
<div class="b" style="left:0px;top:798px;width:1500px;height:46px;background:#dbdbdb;border-top:1px solid #c9c9c9"></div>
<div class="t" style="left:2px;top:808.5px;font-size:10px;color:#111;letter-spacing:0.22px">239.9625,10.4983</div>
<div class="t" style="left:2px;top:828.5px;font-size:10px;color:#111;letter-spacing:0.22px">@239.9625,10.4983</div>
<div class="b" style="left:253px;top:802px;width:1px;height:40px;background:#9a9a9a"></div>
<div class="t" style="left:256px;top:808.5px;font-size:10px;color:#111;letter-spacing:0.22px">240.1921&lt;3°</div>
<div class="t" style="left:256px;top:828.5px;font-size:10px;color:#111;letter-spacing:0.22px">@240.1921&lt;3°</div>
<div class="t" style="left:434px;width:400px;text-align:center;top:812.0px;font-size:10px;color:#111;letter-spacing:0.22px">Selezionare entità o regione</div>
<div class="t" style="left:434px;width:400px;text-align:center;top:823.0px;font-size:10px;color:#111;letter-spacing:0.22px">Spostare entità o riferimento</div>
<svg style="left:717px;top:806px" width="20" height="30" viewBox="0 0 20 30" ><rect x="1.5" y="1.5" width="17" height="27" rx="8.5" fill="#fff" stroke="#222" stroke-width="1"/><path d="M1.5 12 h17 M10 1.5 v10.5" stroke="#222" stroke-width="0.8"/><rect x="8" y="4" width="4" height="7" rx="2" fill="#fff" stroke="#222" stroke-width="0.8"/></svg>
<div class="t" style="left:949px;top:812.0px;font-size:10px;color:#111;letter-spacing:0.22px">Entità selezionate:</div>
<div class="t" style="left:949px;top:823.0px;font-size:10px;color:#111;letter-spacing:0.22px">149 entità su livello "0"</div>
<div class="b" style="left:506px;top:818px;width:6px;height:6px;border-radius:3px;background:#c6c6c6"></div>
<div class="b" style="left:939px;top:818px;width:6px;height:6px;border-radius:3px;background:#c6c6c6"></div>
<div class="b" style="left:1269px;top:818px;width:6px;height:6px;border-radius:3px;background:#c6c6c6"></div>
</body></html>
